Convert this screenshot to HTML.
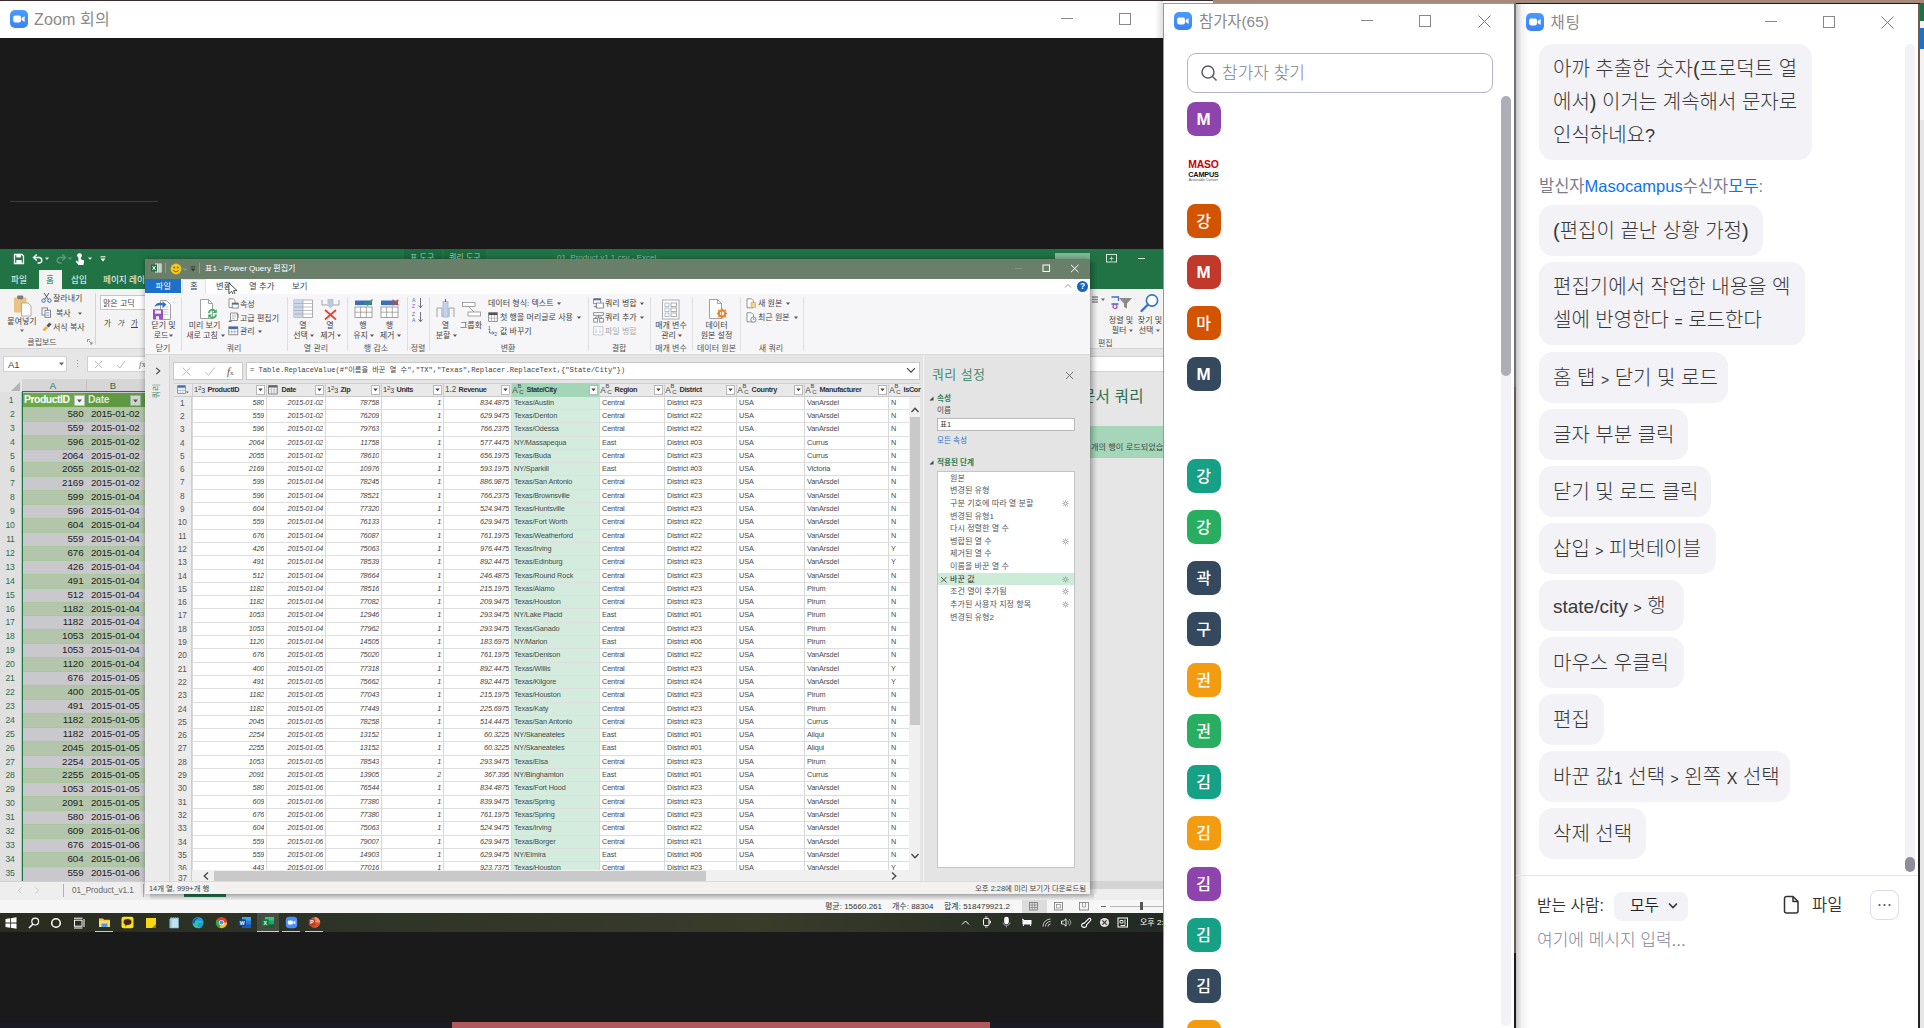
<!DOCTYPE html><html lang="ko"><head><meta charset="utf-8"><title>Zoom</title><style>
*{box-sizing:border-box;margin:0;padding:0}
html,body{width:1924px;height:1028px;overflow:hidden;background:#1a1a1a}
body{font-family:"Liberation Sans","Noto Sans CJK KR",sans-serif;position:relative;color:#222}
.a{position:absolute}
.t{position:absolute;white-space:nowrap;line-height:1}
.zi{position:absolute;width:18px;height:18px;border-radius:5px;background:linear-gradient(#4a9bff,#3b82f6)}
.av{position:absolute;left:1186.5px;width:34px;height:34px;border-radius:8.5px;color:#fff;font-size:17px;line-height:36px;text-align:center;font-weight:bold}
.av.k{font-weight:500;font-size:16px}
.l{font-size:14px}
.bub{position:absolute;left:1539px;height:51px;border-radius:14px;background:#f2f2f7;font-size:20px;line-height:52px;padding-left:14px;color:#383838;white-space:nowrap;font-weight:300}

.s{position:absolute;white-space:nowrap;line-height:1;font-size:8px;color:#444}
.r{text-align:right}
.c{text-align:center}
.pq td{padding:0}
.row{position:absolute;left:0;height:14px;width:736px}
.cell{position:absolute;top:0;height:14px;line-height:12px;font-size:7.3px;color:#4a4a4a;letter-spacing:-.13px;white-space:nowrap;overflow:hidden}
.num{font-style:italic;text-align:right;color:#444;letter-spacing:-.17px}
.xr{position:absolute;left:0;width:146px;height:14px}
.xr div{position:absolute;top:0;height:14px;line-height:14px;font-size:9.8px;color:#222;white-space:nowrap;letter-spacing:-.1px}
</style></head><body><div class="a" style="left:0;top:0;width:1924px;height:3px;background:#a58a7c"></div><div class="a" style="left:0;top:0;width:1213px;height:38px;background:#fff;border-top:1px solid #3a2b2e"></div><div class="zi" style="left:10px;top:10px"></div><svg class="a" style="left:10px;top:10px" width="18" height="18" viewBox="0 0 18 18"><rect x="3.2" y="5.6" width="7.8" height="6.8" rx="1.8" fill="#fff"/><path d="M11.6 8.1 L14.6 6 V12 L11.6 9.9Z" fill="#fff"/></svg><div class="t" style="left:34px;top:11.5px;font-size:16px;color:#8a8a8a;letter-spacing:.15px">Zoom 회의</div><div class="a" style="left:1061px;top:18px;width:12px;height:1px;background:#888"></div><div class="a" style="left:1119px;top:13px;width:12px;height:12px;border:1px solid #888"></div><div class="a" style="left:10px;top:201px;width:148px;height:1px;background:#3c3c3c"></div><div class="a" style="left:0;top:1022px;width:1164px;height:6px;background:#1b1b26"></div><div class="a" style="left:452px;top:1022px;width:538px;height:6px;background:#b05a5e"></div><div class="a" style="left:0px;top:249px;width:1164px;height:683px;background:#e6e6e6;"></div><div class="a" style="left:0px;top:249px;width:1164px;height:40px;background:#217346;"></div><div class="a" style="left:404px;top:249px;width:38px;height:12px;background:#1d6a3f;"></div><div class="a" style="left:444px;top:249px;width:42px;height:12px;background:#1d6a3f;"></div><div class="a" style="left:0;top:249px;width:1164px;height:10px;overflow:hidden"><div class="s" style="left:410px;top:4.5px;font-size:8px;color:#a9cdb8;">표 도구</div><div class="s" style="left:449px;top:4.5px;font-size:8px;color:#a9cdb8;">쿼리 도구</div><div class="s" style="left:557px;top:4.5px;font-size:8px;color:#8dbba2;">01_Product v1.1.csv  -  Excel</div></div><div class="a" style="left:1055px;top:253px;width:35px;height:7px;background:#7fb896;"></div><svg class="a" style="left:1106px;top:254px" width="12" height="9" viewBox="0 0 12 9"><rect x=".5" y=".5" width="10" height="7.5" fill="none" stroke="#cfe3d6"/><path d="M5.5 2.5V6.5M3.5 4.5H7.5" stroke="#cfe3d6" stroke-width=".8"/></svg><div class="a" style="left:1138px;top:258px;width:7px;height:1px;background:#cfe3d6;"></div><svg class="a" style="left:13px;top:253px" width="12" height="12" viewBox="0 0 12 12"><path d="M1.5 1.5H9L10.5 3V10.5H1.5Z" fill="none" stroke="#fff" stroke-width="1.3"/><rect x="3.3" y="1.5" width="4.6" height="3" fill="#fff"/><rect x="3.3" y="7" width="5.4" height="3.5" fill="#fff"/></svg><svg class="a" style="left:32px;top:253px" width="12" height="12" viewBox="0 0 12 12"><path d="M2 4.5H7.5A2.8 2.8 0 0 1 7.5 10H5.5" fill="none" stroke="#fff" stroke-width="1.4"/><path d="M4.8 1.5L1.5 4.5L4.8 7.5" fill="none" stroke="#fff" stroke-width="1.4"/></svg><svg class="a" style="left:45px;top:257px" width="5" height="4" viewBox="0 0 5 4"><path d="M0 .5H4L2 3Z" fill="#dfece4"/></svg><svg class="a" style="left:55px;top:253px" width="12" height="12" viewBox="0 0 12 12"><path d="M10 4.5H4.5A2.8 2.8 0 0 0 4.5 10H6.5" fill="none" stroke="#5d9c79" stroke-width="1.4"/><path d="M7.2 1.5L10.5 4.5L7.2 7.5" fill="none" stroke="#5d9c79" stroke-width="1.4"/></svg><svg class="a" style="left:68px;top:257px" width="5" height="4" viewBox="0 0 5 4"><path d="M0 .5H4L2 3Z" fill="#5d9c79"/></svg><svg class="a" style="left:74px;top:252px" width="12" height="14" viewBox="0 0 12 14"><circle cx="5.5" cy="3.6" r="2.4" fill="#fff"/><path d="M4.4 5V10L2.6 8.6L1.6 9.6L4.6 13H9.4L10.2 8.4L6.8 7.2V5Z" fill="#fff"/></svg><svg class="a" style="left:88px;top:257px" width="5" height="4" viewBox="0 0 5 4"><path d="M0 .5H4L2 3Z" fill="#dfece4"/></svg><svg class="a" style="left:100px;top:256px" width="6" height="6" viewBox="0 0 6 6"><path d="M.5 .8H5.5" stroke="#fff" stroke-width="1"/><path d="M.5 2.6H5.5L3 5.4Z" fill="#fff"/></svg><div class="s" style="left:11px;top:275.7px;font-size:8.6px;color:#fff;">파일</div><div class="a" style="left:39px;top:270px;width:23px;height:19px;background:#f3f3f3;"></div><div class="s" style="left:46px;top:275.7px;font-size:8.6px;color:#217346;">홈</div><div class="s" style="left:71px;top:275.7px;font-size:8.6px;color:#fff;">삽입</div><div class="s" style="left:103px;top:275.7px;font-size:8.6px;color:#fff;">페이지 레이아</div><div class="a" style="left:0px;top:289px;width:1164px;height:60px;background:#f3f3f3;border-bottom:1px solid #d4d4d4"></div><svg class="a" style="left:12px;top:294px" width="22" height="24" viewBox="0 0 22 24"><rect x="2" y="3.5" width="12.5" height="15" rx="1" fill="#eac282"/><rect x="5.2" y="1.6" width="6" height="3.6" rx="1" fill="#7a7a7a"/><path d="M9.5 9H16L19 12V22H9.5Z" fill="#fff" stroke="#9a9a9a" stroke-width=".8"/></svg><div class="s" style="left:-38px;top:318px;font-size:8px;color:#444;width:120px;text-align:center;">붙여넣기</div><svg class="a" style="left:20px;top:329px" width="5" height="4" viewBox="0 0 5 4"><path d="M0 .5H4L2 3Z" fill="#666"/></svg><svg class="a" style="left:41px;top:292px" width="11" height="11" viewBox="0 0 11 11"><path d="M3 1L7.2 7.2M8 1L3.8 7.2" stroke="#555" stroke-width="1"/><circle cx="2.6" cy="8.6" r="1.7" fill="none" stroke="#2b6cb8" stroke-width="1"/><circle cx="8.4" cy="8.6" r="1.7" fill="none" stroke="#2b6cb8" stroke-width="1"/></svg><div class="s" style="left:53px;top:294.5px;font-size:8px;color:#444;">잘라내기</div><svg class="a" style="left:41px;top:307px" width="11" height="11" viewBox="0 0 11 11"><rect x="1" y="1" width="5.5" height="7" fill="#fff" stroke="#777" stroke-width=".9"/><rect x="4" y="3.3" width="5.5" height="7" fill="#fff" stroke="#777" stroke-width=".9"/><path d="M5.2 5.5H8.3M5.2 7H8.3M5.2 8.5H8.3" stroke="#5b8fd0" stroke-width=".6"/></svg><div class="s" style="left:56px;top:309.5px;font-size:8px;color:#444;">복사</div><svg class="a" style="left:78px;top:311.5px" width="5" height="4" viewBox="0 0 5 4"><path d="M0 .5H4L2 3Z" fill="#666"/></svg><svg class="a" style="left:41px;top:321px" width="12" height="11" viewBox="0 0 12 11"><path d="M1.5 8.5L5 5L7 7L3.5 10.5Z" fill="#e8b04c"/><path d="M5.5 4.5L8.5 1.5L10.5 3.5L7.5 6.5Z" fill="#555"/></svg><div class="s" style="left:53px;top:324px;font-size:8px;color:#444;">서식 복사</div><div class="s" style="left:-18px;top:338.5px;font-size:8px;color:#555;width:120px;text-align:center;">클립보드</div><svg class="a" style="left:87px;top:339px" width="6" height="6" viewBox="0 0 6 6"><path d="M.5 .5H3M.5 .5V3M2 2L5 5M5 2.8V5H2.8" fill="none" stroke="#777" stroke-width=".8"/></svg><div class="a" style="left:95px;top:293px;width:1px;height:52px;background:#d4d4d4;"></div><div class="a" style="left:100px;top:295px;width:60px;height:15px;background:#fff;border:1px solid #c6c6c6"></div><div class="s" style="left:103px;top:299.5px;font-size:8px;color:#444;">맑은 고딕</div><div class="s" style="left:104px;top:320.25px;font-size:7.5px;color:#333;">가</div><div class="s" style="left:117px;top:320.25px;font-size:7.5px;color:#444;font-style:italic">가</div><div class="s" style="left:131px;top:320.25px;font-size:7.5px;color:#444;text-decoration:underline">가</div><svg class="a" style="left:1092px;top:296px" width="8" height="8" viewBox="0 0 8 8"><path d="M0 1H6M0 3.5H6M0 6H6" stroke="#888" stroke-width="1.5"/></svg><svg class="a" style="left:1101px;top:298px" width="5" height="4" viewBox="0 0 5 4"><path d="M0 .5H4L2 3Z" fill="#666"/></svg><svg class="a" style="left:1110px;top:294px" width="24" height="16" viewBox="0 0 24 16"><path d="M1.5 3H8.5V7M1.5 10H8.5" fill="none" stroke="#3b6fc4" stroke-width="1.3"/><circle cx="5" cy="12.5" r="2" fill="none" stroke="#a050b0" stroke-width="1.2"/><path d="M9 4H22L17 9.5V14.5L14 13V9.5Z" fill="#8a8a8a"/></svg><svg class="a" style="left:1139px;top:293px" width="22" height="20" viewBox="0 0 22 20"><circle cx="13" cy="7.5" r="5.6" fill="#fff" stroke="#3273c4" stroke-width="1.6"/><path d="M9 11.5L2.5 18" stroke="#3273c4" stroke-width="2.4" stroke-linecap="round"/></svg><div class="s" style="left:1061px;top:317px;font-size:8px;color:#444;width:120px;text-align:center;">정렬 및</div><div class="s" style="left:1090px;top:317px;font-size:8px;color:#444;width:120px;text-align:center;">찾기 및</div><div class="s" style="left:1059px;top:327px;font-size:8px;color:#444;width:120px;text-align:center;">필터</div><div class="s" style="left:1086px;top:327px;font-size:8px;color:#444;width:120px;text-align:center;">선택</div><svg class="a" style="left:1129px;top:329px" width="5" height="4" viewBox="0 0 5 4"><path d="M0 .5H4L2 3Z" fill="#666"/></svg><svg class="a" style="left:1156px;top:329px" width="5" height="4" viewBox="0 0 5 4"><path d="M0 .5H4L2 3Z" fill="#666"/></svg><div class="s" style="left:1098px;top:339.5px;font-size:8px;color:#555;">편집</div><div class="a" style="left:3px;top:356px;width:64px;height:16px;background:#fff;border:1px solid #d0d0d0"></div><div class="s" style="left:8px;top:360.25px;font-size:9.5px;color:#444;">A1</div><svg class="a" style="left:59px;top:362px" width="6" height="4" viewBox="0 0 6 4"><path d="M0 .5H5L2.5 3.5Z" fill="#666"/></svg><div class="a" style="left:77px;top:360px;width:1px;height:1px;background:#999;"></div><div class="a" style="left:77px;top:363px;width:1px;height:1px;background:#999;"></div><div class="a" style="left:77px;top:366px;width:1px;height:1px;background:#999;"></div><div class="a" style="left:87px;top:356px;width:1077px;height:16px;background:#fff;border:1px solid #d0d0d0"></div><svg class="a" style="left:94px;top:360px" width="9" height="9" viewBox="0 0 9 9"><path d="M1 1L8 8M8 1L1 8" stroke="#b8b8b8" stroke-width="1"/></svg><svg class="a" style="left:116px;top:360px" width="10" height="9" viewBox="0 0 10 9"><path d="M1 5L3.8 8L9 1" fill="none" stroke="#b8b8b8" stroke-width="1"/></svg><div class="s" style="left:139px;top:360px;font-size:9px;color:#666;font-family:'Liberation Serif',serif"><i>f</i>x</div><div class="a" style="left:0px;top:379px;width:1164px;height:13px;background:#e6e6e6;"></div><svg class="a" style="left:10px;top:381px" width="11" height="11" viewBox="0 0 11 11"><path d="M10 1V10H1Z" fill="#b4b4b4"/></svg><div class="a" style="left:22px;top:379px;width:124px;height:13px;background:#d6d6d6;border-bottom:1px solid #217346"></div><div class="a" style="left:85.5px;top:380px;width:1px;height:11px;background:#c2c2c2;"></div><div class="s" style="left:-7px;top:380.75px;font-size:9.5px;color:#217346;width:120px;text-align:center;">A</div><div class="s" style="left:53px;top:380.75px;font-size:9.5px;color:#217346;width:120px;text-align:center;">B</div><div class="a" style="left:0px;top:392px;width:22px;height:489px;background:#e0e0e0;"></div><div class="a" style="left:22px;top:392px;width:124px;height:489px;background:#c9c8cd;"></div><div class="a" style="left:22px;top:392.5px;width:124px;height:15px;background:#6aa84a;"></div><div class="a" style="left:85px;top:392.5px;width:61px;height:15px;background:#5f9a43;"></div><div class="s" style="left:24px;top:395px;font-size:10.4px;color:#fff;font-weight:bold;letter-spacing:-.45px">ProductID</div><div class="s" style="left:88px;top:395px;font-size:10.4px;font-weight:bold;color:#d8e8cf;letter-spacing:-.3px">Date</div><div class="a" style="left:74px;top:395px;width:11px;height:11px;background:#f4f4f4;border:1px solid #bbb"></div><svg class="a" style="left:77px;top:399px" width="6" height="4" viewBox="0 0 6 4"><path d="M0 .5H5L2.5 3.5Z" fill="#555"/></svg><div class="a" style="left:130px;top:395px;width:11px;height:11px;background:#cfd6c8;border:1px solid #9aa"></div><svg class="a" style="left:133px;top:399px" width="6" height="4" viewBox="0 0 6 4"><path d="M0 .5H5L2.5 3.5Z" fill="#555"/></svg><div class="s r" style="left:0;top:396px;width:13.5px;font-size:8.6px;color:#2f6b4b">1</div><div class="xr" style="top:406.81px"><div style="left:22px;width:124px;background:#b3c6ab;border-top:1px solid #a9c79c"></div><div style="left:0;width:14.5px;text-align:right;font-size:8.6px;color:#2f6b4b;letter-spacing:-.3px">2</div><div style="left:22px;width:61.5px;text-align:right">580</div><div style="left:89px;width:50.5px;text-align:right;letter-spacing:-.15px">2015-01-02</div></div><div class="xr" style="top:420.72px"><div style="left:22px;width:124px;background:#c9c8cd;border-top:1px solid #a9c79c"></div><div style="left:0;width:14.5px;text-align:right;font-size:8.6px;color:#2f6b4b;letter-spacing:-.3px">3</div><div style="left:22px;width:61.5px;text-align:right">559</div><div style="left:89px;width:50.5px;text-align:right;letter-spacing:-.15px">2015-01-02</div></div><div class="xr" style="top:434.63px"><div style="left:22px;width:124px;background:#b3c6ab;border-top:1px solid #a9c79c"></div><div style="left:0;width:14.5px;text-align:right;font-size:8.6px;color:#2f6b4b;letter-spacing:-.3px">4</div><div style="left:22px;width:61.5px;text-align:right">596</div><div style="left:89px;width:50.5px;text-align:right;letter-spacing:-.15px">2015-01-02</div></div><div class="xr" style="top:448.54px"><div style="left:22px;width:124px;background:#c9c8cd;border-top:1px solid #a9c79c"></div><div style="left:0;width:14.5px;text-align:right;font-size:8.6px;color:#2f6b4b;letter-spacing:-.3px">5</div><div style="left:22px;width:61.5px;text-align:right">2064</div><div style="left:89px;width:50.5px;text-align:right;letter-spacing:-.15px">2015-01-02</div></div><div class="xr" style="top:462.45px"><div style="left:22px;width:124px;background:#b3c6ab;border-top:1px solid #a9c79c"></div><div style="left:0;width:14.5px;text-align:right;font-size:8.6px;color:#2f6b4b;letter-spacing:-.3px">6</div><div style="left:22px;width:61.5px;text-align:right">2055</div><div style="left:89px;width:50.5px;text-align:right;letter-spacing:-.15px">2015-01-02</div></div><div class="xr" style="top:476.36px"><div style="left:22px;width:124px;background:#c9c8cd;border-top:1px solid #a9c79c"></div><div style="left:0;width:14.5px;text-align:right;font-size:8.6px;color:#2f6b4b;letter-spacing:-.3px">7</div><div style="left:22px;width:61.5px;text-align:right">2169</div><div style="left:89px;width:50.5px;text-align:right;letter-spacing:-.15px">2015-01-02</div></div><div class="xr" style="top:490.27px"><div style="left:22px;width:124px;background:#b3c6ab;border-top:1px solid #a9c79c"></div><div style="left:0;width:14.5px;text-align:right;font-size:8.6px;color:#2f6b4b;letter-spacing:-.3px">8</div><div style="left:22px;width:61.5px;text-align:right">599</div><div style="left:89px;width:50.5px;text-align:right;letter-spacing:-.15px">2015-01-04</div></div><div class="xr" style="top:504.18px"><div style="left:22px;width:124px;background:#c9c8cd;border-top:1px solid #a9c79c"></div><div style="left:0;width:14.5px;text-align:right;font-size:8.6px;color:#2f6b4b;letter-spacing:-.3px">9</div><div style="left:22px;width:61.5px;text-align:right">596</div><div style="left:89px;width:50.5px;text-align:right;letter-spacing:-.15px">2015-01-04</div></div><div class="xr" style="top:518.09px"><div style="left:22px;width:124px;background:#b3c6ab;border-top:1px solid #a9c79c"></div><div style="left:0;width:14.5px;text-align:right;font-size:8.6px;color:#2f6b4b;letter-spacing:-.3px">10</div><div style="left:22px;width:61.5px;text-align:right">604</div><div style="left:89px;width:50.5px;text-align:right;letter-spacing:-.15px">2015-01-04</div></div><div class="xr" style="top:532.00px"><div style="left:22px;width:124px;background:#c9c8cd;border-top:1px solid #a9c79c"></div><div style="left:0;width:14.5px;text-align:right;font-size:8.6px;color:#2f6b4b;letter-spacing:-.3px">11</div><div style="left:22px;width:61.5px;text-align:right">559</div><div style="left:89px;width:50.5px;text-align:right;letter-spacing:-.15px">2015-01-04</div></div><div class="xr" style="top:545.91px"><div style="left:22px;width:124px;background:#b3c6ab;border-top:1px solid #a9c79c"></div><div style="left:0;width:14.5px;text-align:right;font-size:8.6px;color:#2f6b4b;letter-spacing:-.3px">12</div><div style="left:22px;width:61.5px;text-align:right">676</div><div style="left:89px;width:50.5px;text-align:right;letter-spacing:-.15px">2015-01-04</div></div><div class="xr" style="top:559.82px"><div style="left:22px;width:124px;background:#c9c8cd;border-top:1px solid #a9c79c"></div><div style="left:0;width:14.5px;text-align:right;font-size:8.6px;color:#2f6b4b;letter-spacing:-.3px">13</div><div style="left:22px;width:61.5px;text-align:right">426</div><div style="left:89px;width:50.5px;text-align:right;letter-spacing:-.15px">2015-01-04</div></div><div class="xr" style="top:573.73px"><div style="left:22px;width:124px;background:#b3c6ab;border-top:1px solid #a9c79c"></div><div style="left:0;width:14.5px;text-align:right;font-size:8.6px;color:#2f6b4b;letter-spacing:-.3px">14</div><div style="left:22px;width:61.5px;text-align:right">491</div><div style="left:89px;width:50.5px;text-align:right;letter-spacing:-.15px">2015-01-04</div></div><div class="xr" style="top:587.64px"><div style="left:22px;width:124px;background:#c9c8cd;border-top:1px solid #a9c79c"></div><div style="left:0;width:14.5px;text-align:right;font-size:8.6px;color:#2f6b4b;letter-spacing:-.3px">15</div><div style="left:22px;width:61.5px;text-align:right">512</div><div style="left:89px;width:50.5px;text-align:right;letter-spacing:-.15px">2015-01-04</div></div><div class="xr" style="top:601.55px"><div style="left:22px;width:124px;background:#b3c6ab;border-top:1px solid #a9c79c"></div><div style="left:0;width:14.5px;text-align:right;font-size:8.6px;color:#2f6b4b;letter-spacing:-.3px">16</div><div style="left:22px;width:61.5px;text-align:right">1182</div><div style="left:89px;width:50.5px;text-align:right;letter-spacing:-.15px">2015-01-04</div></div><div class="xr" style="top:615.46px"><div style="left:22px;width:124px;background:#c9c8cd;border-top:1px solid #a9c79c"></div><div style="left:0;width:14.5px;text-align:right;font-size:8.6px;color:#2f6b4b;letter-spacing:-.3px">17</div><div style="left:22px;width:61.5px;text-align:right">1182</div><div style="left:89px;width:50.5px;text-align:right;letter-spacing:-.15px">2015-01-04</div></div><div class="xr" style="top:629.37px"><div style="left:22px;width:124px;background:#b3c6ab;border-top:1px solid #a9c79c"></div><div style="left:0;width:14.5px;text-align:right;font-size:8.6px;color:#2f6b4b;letter-spacing:-.3px">18</div><div style="left:22px;width:61.5px;text-align:right">1053</div><div style="left:89px;width:50.5px;text-align:right;letter-spacing:-.15px">2015-01-04</div></div><div class="xr" style="top:643.28px"><div style="left:22px;width:124px;background:#c9c8cd;border-top:1px solid #a9c79c"></div><div style="left:0;width:14.5px;text-align:right;font-size:8.6px;color:#2f6b4b;letter-spacing:-.3px">19</div><div style="left:22px;width:61.5px;text-align:right">1053</div><div style="left:89px;width:50.5px;text-align:right;letter-spacing:-.15px">2015-01-04</div></div><div class="xr" style="top:657.19px"><div style="left:22px;width:124px;background:#b3c6ab;border-top:1px solid #a9c79c"></div><div style="left:0;width:14.5px;text-align:right;font-size:8.6px;color:#2f6b4b;letter-spacing:-.3px">20</div><div style="left:22px;width:61.5px;text-align:right">1120</div><div style="left:89px;width:50.5px;text-align:right;letter-spacing:-.15px">2015-01-04</div></div><div class="xr" style="top:671.10px"><div style="left:22px;width:124px;background:#c9c8cd;border-top:1px solid #a9c79c"></div><div style="left:0;width:14.5px;text-align:right;font-size:8.6px;color:#2f6b4b;letter-spacing:-.3px">21</div><div style="left:22px;width:61.5px;text-align:right">676</div><div style="left:89px;width:50.5px;text-align:right;letter-spacing:-.15px">2015-01-05</div></div><div class="xr" style="top:685.01px"><div style="left:22px;width:124px;background:#b3c6ab;border-top:1px solid #a9c79c"></div><div style="left:0;width:14.5px;text-align:right;font-size:8.6px;color:#2f6b4b;letter-spacing:-.3px">22</div><div style="left:22px;width:61.5px;text-align:right">400</div><div style="left:89px;width:50.5px;text-align:right;letter-spacing:-.15px">2015-01-05</div></div><div class="xr" style="top:698.92px"><div style="left:22px;width:124px;background:#c9c8cd;border-top:1px solid #a9c79c"></div><div style="left:0;width:14.5px;text-align:right;font-size:8.6px;color:#2f6b4b;letter-spacing:-.3px">23</div><div style="left:22px;width:61.5px;text-align:right">491</div><div style="left:89px;width:50.5px;text-align:right;letter-spacing:-.15px">2015-01-05</div></div><div class="xr" style="top:712.83px"><div style="left:22px;width:124px;background:#b3c6ab;border-top:1px solid #a9c79c"></div><div style="left:0;width:14.5px;text-align:right;font-size:8.6px;color:#2f6b4b;letter-spacing:-.3px">24</div><div style="left:22px;width:61.5px;text-align:right">1182</div><div style="left:89px;width:50.5px;text-align:right;letter-spacing:-.15px">2015-01-05</div></div><div class="xr" style="top:726.74px"><div style="left:22px;width:124px;background:#c9c8cd;border-top:1px solid #a9c79c"></div><div style="left:0;width:14.5px;text-align:right;font-size:8.6px;color:#2f6b4b;letter-spacing:-.3px">25</div><div style="left:22px;width:61.5px;text-align:right">1182</div><div style="left:89px;width:50.5px;text-align:right;letter-spacing:-.15px">2015-01-05</div></div><div class="xr" style="top:740.65px"><div style="left:22px;width:124px;background:#b3c6ab;border-top:1px solid #a9c79c"></div><div style="left:0;width:14.5px;text-align:right;font-size:8.6px;color:#2f6b4b;letter-spacing:-.3px">26</div><div style="left:22px;width:61.5px;text-align:right">2045</div><div style="left:89px;width:50.5px;text-align:right;letter-spacing:-.15px">2015-01-05</div></div><div class="xr" style="top:754.56px"><div style="left:22px;width:124px;background:#c9c8cd;border-top:1px solid #a9c79c"></div><div style="left:0;width:14.5px;text-align:right;font-size:8.6px;color:#2f6b4b;letter-spacing:-.3px">27</div><div style="left:22px;width:61.5px;text-align:right">2254</div><div style="left:89px;width:50.5px;text-align:right;letter-spacing:-.15px">2015-01-05</div></div><div class="xr" style="top:768.47px"><div style="left:22px;width:124px;background:#b3c6ab;border-top:1px solid #a9c79c"></div><div style="left:0;width:14.5px;text-align:right;font-size:8.6px;color:#2f6b4b;letter-spacing:-.3px">28</div><div style="left:22px;width:61.5px;text-align:right">2255</div><div style="left:89px;width:50.5px;text-align:right;letter-spacing:-.15px">2015-01-05</div></div><div class="xr" style="top:782.38px"><div style="left:22px;width:124px;background:#c9c8cd;border-top:1px solid #a9c79c"></div><div style="left:0;width:14.5px;text-align:right;font-size:8.6px;color:#2f6b4b;letter-spacing:-.3px">29</div><div style="left:22px;width:61.5px;text-align:right">1053</div><div style="left:89px;width:50.5px;text-align:right;letter-spacing:-.15px">2015-01-05</div></div><div class="xr" style="top:796.29px"><div style="left:22px;width:124px;background:#b3c6ab;border-top:1px solid #a9c79c"></div><div style="left:0;width:14.5px;text-align:right;font-size:8.6px;color:#2f6b4b;letter-spacing:-.3px">30</div><div style="left:22px;width:61.5px;text-align:right">2091</div><div style="left:89px;width:50.5px;text-align:right;letter-spacing:-.15px">2015-01-05</div></div><div class="xr" style="top:810.20px"><div style="left:22px;width:124px;background:#c9c8cd;border-top:1px solid #a9c79c"></div><div style="left:0;width:14.5px;text-align:right;font-size:8.6px;color:#2f6b4b;letter-spacing:-.3px">31</div><div style="left:22px;width:61.5px;text-align:right">580</div><div style="left:89px;width:50.5px;text-align:right;letter-spacing:-.15px">2015-01-06</div></div><div class="xr" style="top:824.11px"><div style="left:22px;width:124px;background:#b3c6ab;border-top:1px solid #a9c79c"></div><div style="left:0;width:14.5px;text-align:right;font-size:8.6px;color:#2f6b4b;letter-spacing:-.3px">32</div><div style="left:22px;width:61.5px;text-align:right">609</div><div style="left:89px;width:50.5px;text-align:right;letter-spacing:-.15px">2015-01-06</div></div><div class="xr" style="top:838.02px"><div style="left:22px;width:124px;background:#c9c8cd;border-top:1px solid #a9c79c"></div><div style="left:0;width:14.5px;text-align:right;font-size:8.6px;color:#2f6b4b;letter-spacing:-.3px">33</div><div style="left:22px;width:61.5px;text-align:right">676</div><div style="left:89px;width:50.5px;text-align:right;letter-spacing:-.15px">2015-01-06</div></div><div class="xr" style="top:851.93px"><div style="left:22px;width:124px;background:#b3c6ab;border-top:1px solid #a9c79c"></div><div style="left:0;width:14.5px;text-align:right;font-size:8.6px;color:#2f6b4b;letter-spacing:-.3px">34</div><div style="left:22px;width:61.5px;text-align:right">604</div><div style="left:89px;width:50.5px;text-align:right;letter-spacing:-.15px">2015-01-06</div></div><div class="xr" style="top:865.84px"><div style="left:22px;width:124px;background:#c9c8cd;border-top:1px solid #a9c79c"></div><div style="left:0;width:14.5px;text-align:right;font-size:8.6px;color:#2f6b4b;letter-spacing:-.3px">35</div><div style="left:22px;width:61.5px;text-align:right">559</div><div style="left:89px;width:50.5px;text-align:right;letter-spacing:-.15px">2015-01-06</div></div><div class="a" style="left:21.5px;top:392px;width:1.5px;height:489px;background:#217346;"></div><div class="a" style="left:0px;top:392px;width:22px;height:489px;background:transparent;border-right:1px solid #bdbdbd"></div><div class="a" style="left:0px;top:881px;width:1164px;height:18.5px;background:#eeeeee;border-top:1px solid #cfcfcf"></div><svg class="a" style="left:17px;top:887px" width="6" height="7" viewBox="0 0 6 7"><path d="M4.5 .5L1.5 3.5L4.5 6.5" fill="none" stroke="#c9c9c9" stroke-width="1"/></svg><svg class="a" style="left:34px;top:887px" width="6" height="7" viewBox="0 0 6 7"><path d="M1.5 .5L4.5 3.5L1.5 6.5" fill="none" stroke="#c9c9c9" stroke-width="1"/></svg><div class="a" style="left:63px;top:884px;width:1px;height:13px;background:#b0b0b0;"></div><div class="s" style="left:72px;top:886.9px;font-size:8.2px;color:#666;">01_Product_v1.1</div><div class="a" style="left:143px;top:884px;width:1px;height:13px;background:#b0b0b0;"></div><div class="a" style="left:184px;top:894px;width:42px;height:3px;background:#217346;"></div><div class="a" style="left:0px;top:899.5px;width:1164px;height:13.5px;background:#f6f6f6;"></div><div class="s" style="left:825px;top:902.5px;font-size:8px;color:#333;">평균: 15660.261</div><div class="s" style="left:892px;top:902.5px;font-size:8px;color:#333;">개수: 88304</div><div class="s" style="left:944px;top:902.5px;font-size:8px;color:#333;">합계: 518479921.2</div><div class="a" style="left:1022px;top:900px;width:25px;height:13px;background:#dcdcdc;"></div><svg class="a" style="left:1029px;top:902px" width="10" height="9" viewBox="0 0 10 9"><rect x=".5" y=".5" width="8" height="7.5" fill="none" stroke="#777" stroke-width=".8"/><path d="M3.2 .5V8M5.8 .5V8M.5 3H8.5M.5 5.5H8.5" stroke="#777" stroke-width=".6"/></svg><svg class="a" style="left:1054px;top:902px" width="10" height="9" viewBox="0 0 10 9"><rect x=".5" y=".5" width="8" height="7.5" fill="none" stroke="#777" stroke-width=".8"/><rect x="2.5" y="2.5" width="4" height="3.5" fill="none" stroke="#777" stroke-width=".6"/></svg><svg class="a" style="left:1079px;top:902px" width="11" height="9" viewBox="0 0 11 9"><rect x=".5" y=".5" width="9" height="7.5" fill="none" stroke="#777" stroke-width=".8"/><path d="M3.5 .5V5H6.5V.5" fill="none" stroke="#777" stroke-width=".6"/></svg><div class="a" style="left:1101px;top:906px;width:5px;height:1px;background:#666;"></div><div class="a" style="left:1110px;top:906px;width:54px;height:1px;background:#b8b8b8;"></div><div class="a" style="left:1140px;top:902px;width:2.5px;height:8px;background:#555;"></div><div class="a" style="left:1090px;top:372px;width:74px;height:509px;background:#e6e6e6;"></div><div class="s" style="left:1081px;top:388.7px;font-size:15.6px;color:#2c7050;letter-spacing:.2px">문서 쿼리</div><div class="a" style="left:1090px;top:426px;width:74px;height:32px;background:#a5d6ba;"></div><div class="s" style="left:1091px;top:444.4px;font-size:8.2px;color:#444;">개의 행이 로드되었습</div><div class="a" style="left:1090px;top:881px;width:74px;height:8px;background:#d4d4d4;"></div><div class="a" style="left:1090px;top:262px;width:8px;height:632px;background:linear-gradient(90deg,rgba(0,0,0,.16),rgba(0,0,0,0));"></div><div class="a" style="left:150px;top:894px;width:944px;height:6px;background:linear-gradient(rgba(0,0,0,.16),rgba(0,0,0,0));"></div><div class="a" style="left:0px;top:913px;width:1164px;height:19px;background:linear-gradient(90deg,#2b2c20 0%,#2c3326 25%,#34382a 50%,#3a3c2a 65%,#2c3226 82%,#222a24 100%);"></div><svg class="a" style="left:5px;top:917px" width="12" height="12" viewBox="0 0 12 12"><path d="M.5 2L5 1.3V5.6H.5ZM5.8 1.2L11.5.3V5.6H5.8ZM.5 6.4H5V10.7L.5 10ZM5.8 6.4H11.5V11.7L5.8 10.8Z" fill="#fff"/></svg><svg class="a" style="left:28px;top:917px" width="12" height="12" viewBox="0 0 12 12"><circle cx="7.2" cy="4.6" r="3.4" fill="none" stroke="#fff" stroke-width="1.2"/><path d="M4.8 7.2L1 11" stroke="#fff" stroke-width="1.4"/></svg><svg class="a" style="left:50px;top:917px" width="12" height="12" viewBox="0 0 12 12"><circle cx="6" cy="6" r="4.3" fill="none" stroke="#fff" stroke-width="1.5"/></svg><svg class="a" style="left:73px;top:917px" width="13" height="12" viewBox="0 0 13 12"><rect x="1.5" y="3.2" width="7.5" height="6" fill="none" stroke="#fff" stroke-width="1"/><path d="M1 1.2H9.5M1 11H9.5M11 2V10" stroke="#fff" stroke-width="1"/></svg><svg class="a" style="left:98px;top:916px" width="13" height="13" viewBox="0 0 13 13"><path d="M1 2.5H5L6 3.8H12V11H1Z" fill="#f4c64a"/><rect x="1" y="5" width="11" height="6" fill="#fbdc74"/><rect x="3.5" y="7.5" width="6" height="3.5" fill="#4d9be8"/></svg><div class="a" style="left:95px;top:930.5px;width:18px;height:1.2px;background:#b9d9b4;"></div><svg class="a" style="left:121px;top:916px" width="13" height="13" viewBox="0 0 13 13"><rect x=".5" y=".8" width="12" height="11.4" rx="2" fill="#f7e01e"/><ellipse cx="6.5" cy="6" rx="4" ry="3" fill="#47231a"/><path d="M4.6 8L4 10.4L6.6 8.6Z" fill="#47231a"/></svg><svg class="a" style="left:145px;top:917px" width="12" height="12" viewBox="0 0 12 12"><rect x="1" y="1" width="10" height="10" fill="#f7d716"/><path d="M7 11L11 7V11Z" fill="#9a7d0a"/></svg><svg class="a" style="left:168px;top:916px" width="12" height="13" viewBox="0 0 12 13"><rect x="2.5" y="2" width="8" height="10" fill="#bfe1ee" stroke="#7fb3c8" stroke-width=".6"/><path d="M3.5 1V3M5.5 1V3M7.5 1V3M9.5 1V3" stroke="#8aa" stroke-width=".7"/><rect x="1.5" y="3" width="2" height="9" fill="#8fc3d8"/></svg><svg class="a" style="left:191px;top:916px" width="14" height="13" viewBox="0 0 14 13"><circle cx="7" cy="6.5" r="5.6" fill="#1b9de2"/><path d="M2 8.5C2 4 11 3 12.4 7.5C9 5.5 6 6.5 6.5 9.5C7 11.5 10 11.8 11.5 10.5C9 13.5 2.5 12.5 2 8.5Z" fill="#35c1a0"/><path d="M1.5 7C2 3 6 1 9.5 2C5.5 2 3.5 4.5 3.8 7.5Z" fill="#0c59a4"/></svg><svg class="a" style="left:215px;top:916px" width="13" height="13" viewBox="0 0 13 13"><circle cx="6.5" cy="6.5" r="5.6" fill="#e33b2e"/><path d="M6.5 6.5L1.7 3.6A5.6 5.6 0 0 0 4.6 11.8Z" fill="#2da94f"/><path d="M6.5 6.5L4.6 11.8A5.6 5.6 0 0 0 12.1 6.5Z" fill="#fcc31e"/><circle cx="6.5" cy="6.5" r="2.6" fill="#fff"/><circle cx="6.5" cy="6.5" r="2" fill="#4a8af4"/></svg><svg class="a" style="left:238px;top:916px" width="14" height="13" viewBox="0 0 14 13"><rect x="4" y="1" width="9" height="11" rx="1" fill="#2b7cd3"/><rect x="4" y="1" width="9" height="3.6" fill="#41a5ee"/><rect x="4" y="8.4" width="9" height="3.6" fill="#185abd"/><rect x=".8" y="3.2" width="7" height="6.8" rx=".8" fill="#103f91"/><text x="4.3" y="8.6" font-size="5.2" font-weight="bold" fill="#fff" text-anchor="middle" font-family="Liberation Sans,sans-serif">W</text></svg><div class="a" style="left:257px;top:913px;width:22px;height:19px;background:rgba(255,255,255,.13);"></div><svg class="a" style="left:261px;top:916px" width="14" height="13" viewBox="0 0 14 13"><rect x="4" y="1" width="9" height="11" rx="1" fill="#21a366"/><rect x="4" y="1" width="9" height="3.6" fill="#33c481"/><rect x="4" y="8.4" width="9" height="3.6" fill="#185c37"/><rect x=".8" y="3.2" width="7" height="6.8" rx=".8" fill="#107c41"/><text x="4.3" y="8.6" font-size="5.2" font-weight="bold" fill="#fff" text-anchor="middle" font-family="Liberation Sans,sans-serif">X</text></svg><div class="a" style="left:257px;top:930.5px;width:22px;height:1.2px;background:#b9d9b4;"></div><svg class="a" style="left:285px;top:916px" width="13" height="13" viewBox="0 0 13 13"><rect x=".8" y=".8" width="11.4" height="11.4" rx="3.4" fill="#4a8cff"/><rect x="2.8" y="4.4" width="5" height="4.2" rx="1" fill="#fff"/><path d="M8.2 6L10.3 4.6V8.4L8.2 7Z" fill="#fff"/></svg><div class="a" style="left:282px;top:930.5px;width:18px;height:1.2px;background:#b9d9b4;"></div><svg class="a" style="left:308px;top:916px" width="13" height="13" viewBox="0 0 13 13"><circle cx="6.8" cy="6.5" r="5.4" fill="#d35230"/><path d="M6.8 1.1A5.4 5.4 0 0 1 12.2 6.5H6.8Z" fill="#ff8f6b"/><rect x=".8" y="3.2" width="6.6" height="6.6" rx=".8" fill="#c43e1c"/><text x="4.1" y="8.4" font-size="5.2" font-weight="bold" fill="#fff" text-anchor="middle" font-family="Liberation Sans,sans-serif">P</text></svg><div class="a" style="left:305px;top:930.5px;width:18px;height:1.2px;background:#b9d9b4;"></div><svg class="a" style="left:961px;top:919px" width="9" height="7" viewBox="0 0 9 7"><path d="M1 5.5L4.5 2L8 5.5" fill="none" stroke="#fff" stroke-width="1"/></svg><svg class="a" style="left:982px;top:916px" width="9" height="12" viewBox="0 0 9 12"><rect x="1.5" y="2.5" width="5.5" height="7" rx="1" fill="none" stroke="#fff" stroke-width="1"/><path d="M7 5H8.5V7H7M3 1H5.5M3 11H5.5" stroke="#fff" stroke-width=".8" fill="none"/></svg><svg class="a" style="left:1002px;top:916px" width="9" height="12" viewBox="0 0 9 12"><rect x="2.2" y=".8" width="4.6" height="7.4" rx="2.3" fill="#fff"/><path d="M1 6.5C1 10.4 8 10.4 8 6.5" fill="none" stroke="#bbb" stroke-width=".8"/><path d="M4.5 9.6V11.4" stroke="#bbb" stroke-width=".8"/></svg><svg class="a" style="left:1021px;top:917px" width="12" height="10" viewBox="0 0 12 10"><rect x="1.5" y="3" width="9" height="4.5" fill="#fff"/><path d="M1 2L3 3M2.5 7.5V9M9.5 7.5V9" stroke="#fff" stroke-width="1"/></svg><svg class="a" style="left:1041px;top:917px" width="12" height="11" viewBox="0 0 12 11"><path d="M2 9.5A7.5 7.5 0 0 1 9.5 2" fill="none" stroke="#ccc" stroke-width="1"/><path d="M4.5 9.5A5 5 0 0 1 9.5 4.5" fill="none" stroke="#ccc" stroke-width="1"/><path d="M7 9.5A2.5 2.5 0 0 1 9.5 7" fill="none" stroke="#ccc" stroke-width="1"/></svg><svg class="a" style="left:1060px;top:917px" width="14" height="11" viewBox="0 0 14 11"><path d="M1.5 4H3.5L6 1.8V9.2L3.5 7H1.5Z" fill="none" stroke="#fff" stroke-width=".9"/><path d="M7.8 3.6A3 3 0 0 1 7.8 7.4M9.4 2.2A5 5 0 0 1 9.4 8.8" fill="none" stroke="#bbb" stroke-width=".8"/></svg><svg class="a" style="left:1080px;top:916px" width="13" height="13" viewBox="0 0 13 13"><path d="M2 10.5C1 9 2 7 4 7.5L8.5 2.8C9.5 1.6 11.6 2.8 10.6 4.4L6.5 9C7 11.2 4 12.2 2 10.5Z" fill="none" stroke="#fff" stroke-width="1.1"/></svg><svg class="a" style="left:1099px;top:917px" width="11" height="11" viewBox="0 0 11 11"><circle cx="5.5" cy="5.5" r="4.6" fill="#ddd"/><path d="M3.4 3.4L7.6 7.6M7.6 3.4L3.4 7.6" stroke="#333" stroke-width="1.1"/></svg><svg class="a" style="left:1117px;top:917px" width="12" height="11" viewBox="0 0 12 11"><rect x="1" y="1" width="9.5" height="9" fill="none" stroke="#fff" stroke-width="1"/><path d="M3 3.5H6V6H3ZM8 2.5V8.5M3.5 8.5H8" stroke="#fff" stroke-width=".9" fill="none"/></svg><div class="s" style="left:1140px;top:919px;font-size:8px;color:#fff;">오후 2:</div><div class="a" style="left:145px;top:259px;width:945px;height:635px;background:#f0f0f0;box-shadow:0 0 6px rgba(0,0,0,.35)"></div><div class="a" style="left:145px;top:259px;width:945px;height:20px;background:#6a7f69;"></div><svg class="a" style="left:151px;top:263px" width="11" height="10" viewBox="0 0 11 10"><rect x="4" y=".5" width="6.5" height="9" fill="#fff"/><path d="M5.2 .5V9.5M7.2 .5V9.5M9 .5V9.5" stroke="#6a8169" stroke-width=".7"/><rect x="0" y="1.6" width="6" height="6.8" fill="#1f6b41"/><path d="M1.4 3L4.6 7M4.6 3L1.4 7" stroke="#fff" stroke-width="1"/></svg><div class="a" style="left:165px;top:263px;width:1px;height:10px;background:#8ea08c;"></div><svg class="a" style="left:170px;top:262.5px" width="12" height="12" viewBox="0 0 12 12"><circle cx="6" cy="6" r="5.4" fill="#f5c518"/><circle cx="4.2" cy="4.6" r=".8" fill="#5a4500"/><circle cx="7.8" cy="4.6" r=".8" fill="#5a4500"/><path d="M3.2 7C4.4 9.2 7.6 9.2 8.8 7" fill="none" stroke="#5a4500" stroke-width=".8"/></svg><svg class="a" style="left:183px;top:267.5px" width="4" height="3" viewBox="0 0 4 3"><path d="M.3 .5L2 2.2L3.7 .5" fill="none" stroke="#b9c6b7" stroke-width=".7"/></svg><svg class="a" style="left:190px;top:266px" width="6" height="6" viewBox="0 0 6 6"><path d="M.8 .8H5.2" stroke="#2e3c2e" stroke-width="1"/><path d="M.5 2.6H5.5L3 5.4Z" fill="#2e3c2e"/></svg><div class="a" style="left:199px;top:263px;width:1px;height:10px;background:#8ea08c;"></div><div class="s" style="left:205px;top:264.975px;font-size:8.05px;color:#fff;">표1 - Power Query 편집기</div><div class="a" style="left:1015px;top:268px;width:7px;height:1px;background:#84977f;"></div><svg class="a" style="left:1042px;top:264px" width="9" height="9" viewBox="0 0 9 9"><rect x="1" y="1" width="6.5" height="6.5" fill="none" stroke="#fff" stroke-width="1"/></svg><svg class="a" style="left:1070px;top:264px" width="10" height="9" viewBox="0 0 10 9"><path d="M1 .8L8.5 8.2M8.5 .8L1 8.2" stroke="#fff" stroke-width="1"/></svg><div class="a" style="left:145px;top:279px;width:945px;height:15.5px;background:#fff;"></div><div class="a" style="left:145px;top:279px;width:36px;height:14px;background:#1e6fc8;"></div><div class="s" style="left:155.5px;top:282.1px;font-size:8.4px;color:#fff;">파일</div><div class="a" style="left:182px;top:279px;width:24px;height:15px;background:#f6f6f8;border:1px solid #e2e2e2;border-bottom:none"></div><div class="s" style="left:190px;top:282.1px;font-size:8.4px;color:#444;">홈</div><div class="s" style="left:216px;top:282.1px;font-size:8.4px;color:#444;">변환</div><div class="s" style="left:249px;top:282.1px;font-size:8.4px;color:#444;">열 추가</div><div class="s" style="left:292px;top:282.1px;font-size:8.4px;color:#444;">보기</div><svg class="a" style="left:227.6px;top:282.4px" width="10" height="15" viewBox="0 0 8 12"><path d="M.7 .7V9.4L2.9 7.4L4.4 10.8L5.9 10.2L4.4 6.9H7.2Z" fill="#fff" stroke="#222" stroke-width=".65"/></svg><svg class="a" style="left:1064px;top:283px" width="8" height="6" viewBox="0 0 8 6"><path d="M1 4.5L4 1.5L7 4.5" fill="none" stroke="#888" stroke-width=".9"/></svg><div class="a" style="left:1077px;top:280.5px;width:11px;height:11px;border-radius:50%;background:#1565c8;color:#fff;font-size:8.5px;font-weight:bold;line-height:11px;text-align:center">?</div><div class="a" style="left:145px;top:294px;width:945px;height:61px;background:#f6f6f8;border-bottom:1px solid #dadada"></div><div class="a" style="left:181px;top:297px;width:1px;height:54px;background:#e0e0e0;"></div><div class="a" style="left:287px;top:297px;width:1px;height:54px;background:#e0e0e0;"></div><div class="a" style="left:347px;top:297px;width:1px;height:54px;background:#e0e0e0;"></div><div class="a" style="left:407px;top:297px;width:1px;height:54px;background:#e0e0e0;"></div><div class="a" style="left:429px;top:297px;width:1px;height:54px;background:#e0e0e0;"></div><div class="a" style="left:588px;top:297px;width:1px;height:54px;background:#e0e0e0;"></div><div class="a" style="left:650px;top:297px;width:1px;height:54px;background:#e0e0e0;"></div><div class="a" style="left:692px;top:297px;width:1px;height:54px;background:#e0e0e0;"></div><div class="a" style="left:740px;top:297px;width:1px;height:54px;background:#e0e0e0;"></div><div class="a" style="left:803px;top:297px;width:1px;height:54px;background:#e0e0e0;"></div><svg class="a" style="left:152px;top:298px" width="20" height="23" viewBox="0 0 20 23"><path d="M8.5 2.5H14.5L18.5 6.5V21.5H8.5Z" fill="#fff" stroke="#8a8a8a" stroke-width=".8"/><path d="M10.5 9H16.5M10.5 11.5H16.5M10.5 14H16.5M10.5 16.5H16.5" stroke="#b5b5b5" stroke-width=".7"/><rect x="1" y="11.2" width="10" height="10.3" rx=".6" fill="#9b4fc4"/><rect x="3" y="12.4" width="6" height="3.2" fill="#fff"/><rect x="4" y="18.3" width="3" height="3.2" fill="#fff"/><path d="M2.5 9C3.5 5 7.5 4 10.5 5.2V3.2L14.5 6.6L10.5 10V7.6C7.5 6.6 4.5 7.5 2.5 9Z" fill="#2f6fd0"/></svg><div class="s" style="left:103.5px;top:321.5px;font-size:8px;color:#444;width:120px;text-align:center;">닫기 및</div><div class="s" style="left:101px;top:331.5px;font-size:8px;color:#444;width:120px;text-align:center;">로드</div><svg class="a" style="left:169px;top:333.5px" width="5" height="4" viewBox="0 0 5 4"><path d="M0 .5H4L2 3Z" fill="#555"/></svg><div class="s" style="left:103px;top:344.5px;font-size:8px;color:#555;width:120px;text-align:center;">닫기</div><svg class="a" style="left:197px;top:298px" width="22" height="23" viewBox="0 0 22 23"><path d="M3.5 1.5H11.5L15.5 5.5V20.5H3.5Z" fill="#fff" stroke="#8a8a8a" stroke-width=".8"/><path d="M11.5 1.5V5.5H15.5" fill="none" stroke="#8a8a8a" stroke-width=".8"/><path d="M11 15A4.3 4.3 0 0 1 18.6 12.4L19.8 11V15H15.8L17.3 13.6A2.6 2.6 0 0 0 12.8 15Z" fill="#3fae6a"/><path d="M20 16.5A4.3 4.3 0 0 1 12.4 19.1L11.2 20.5V16.5H15.2L13.7 17.9A2.6 2.6 0 0 0 18.2 16.5Z" fill="#3fae6a"/></svg><div class="s" style="left:144.5px;top:321.5px;font-size:8px;color:#444;width:120px;text-align:center;">미리 보기</div><div class="s" style="left:142px;top:331.5px;font-size:8px;color:#444;width:120px;text-align:center;">새로 고침</div><svg class="a" style="left:220.5px;top:333.5px" width="5" height="4" viewBox="0 0 5 4"><path d="M0 .5H4L2 3Z" fill="#555"/></svg><svg class="a" style="left:228px;top:298px" width="11" height="11" viewBox="0 0 11 11"><path d="M1 .8H5.2L7 2.6V9.5H1Z" fill="#fff" stroke="#777" stroke-width=".8"/><rect x="4.2" y="5" width="6" height="5" fill="#fff" stroke="#777" stroke-width=".8"/><rect x="4.2" y="5" width="6" height="1.6" fill="#3d6fb4"/></svg><div class="s" style="left:240px;top:300.5px;font-size:8px;color:#444;">속성</div><svg class="a" style="left:228px;top:312px" width="11" height="11" viewBox="0 0 11 11"><path d="M2.5 1H9.5V8.5H2.5Z" fill="#fff" stroke="#777" stroke-width=".8"/><path d="M4 3H8M4 4.8H8M4 6.6H6.5" stroke="#999" stroke-width=".6"/><path d="M.8 8.5H3.5V10H.8Z" fill="#777"/><path d="M8.5 2.2H10.2V6" fill="none" stroke="#777" stroke-width=".8"/></svg><div class="s" style="left:240px;top:314.5px;font-size:8px;color:#444;">고급 편집기</div><svg class="a" style="left:228px;top:326px" width="11" height="10" viewBox="0 0 11 10"><rect x=".8" y=".8" width="9" height="8" fill="#fff" stroke="#777" stroke-width=".8"/><rect x=".8" y=".8" width="9" height="2.2" fill="#3d6fb4"/><path d="M3.8 3V8.8M6.8 3V8.8M.8 5.8H9.8" stroke="#999" stroke-width=".6"/></svg><div class="s" style="left:240px;top:327.5px;font-size:8px;color:#444;">관리</div><svg class="a" style="left:258px;top:329.5px" width="5" height="4" viewBox="0 0 5 4"><path d="M0 .5H4L2 3Z" fill="#555"/></svg><div class="s" style="left:174px;top:344.5px;font-size:8px;color:#555;width:120px;text-align:center;">쿼리</div><svg class="a" style="left:293px;top:299px" width="21" height="21" viewBox="0 0 21 21"><rect x="1" y="1" width="18.5" height="17.5" fill="#fff" stroke="#9a9a9a" stroke-width=".8"/><rect x="1" y="1" width="9" height="17.5" fill="#c9d6ee"/><path d="M1 4.5H19.5M1 8H19.5M1 11.5H19.5M1 15H19.5M10 1V18.5" stroke="#a8a8a8" stroke-width=".7"/></svg><div class="s" style="left:243px;top:321.5px;font-size:8px;color:#444;width:120px;text-align:center;">열</div><div class="s" style="left:240.5px;top:331.5px;font-size:8px;color:#444;width:120px;text-align:center;">선택</div><svg class="a" style="left:310px;top:333.5px" width="5" height="4" viewBox="0 0 5 4"><path d="M0 .5H4L2 3Z" fill="#555"/></svg><svg class="a" style="left:320px;top:298px" width="21" height="23" viewBox="0 0 21 23"><path d="M2 2V7H19V2" fill="none" stroke="#9a9a9a" stroke-width=".9"/><path d="M7.5 1V7.5L10.5 10.5L13.5 7.5V1Z" fill="#b9c7dc"/><path d="M5 12L16 21.5M16 12L5 21.5" stroke="#e0442e" stroke-width="1.7"/></svg><div class="s" style="left:270px;top:321.5px;font-size:8px;color:#444;width:120px;text-align:center;">열</div><div class="s" style="left:267.5px;top:331.5px;font-size:8px;color:#444;width:120px;text-align:center;">제거</div><svg class="a" style="left:337px;top:333.5px" width="5" height="4" viewBox="0 0 5 4"><path d="M0 .5H4L2 3Z" fill="#555"/></svg><div class="s" style="left:256px;top:344.5px;font-size:8px;color:#555;width:120px;text-align:center;">열 관리</div><svg class="a" style="left:354px;top:299px" width="20" height="21" viewBox="0 0 20 21"><rect x="1" y="1.5" width="17" height="4.6" fill="#3d6fb4"/><rect x="1" y="8" width="17" height="10.5" fill="#fff" stroke="#8a8a8a" stroke-width=".8"/><path d="M1 13.2H18M6.6 8V18.5M12.3 8V18.5" stroke="#8a8a8a" stroke-width=".7"/><path d="M11 3L13.5 6L18.5 .5" fill="none" stroke="#2fa05a" stroke-width="1.3"/></svg><div class="s" style="left:303px;top:321.5px;font-size:8px;color:#444;width:120px;text-align:center;">행</div><div class="s" style="left:300.5px;top:331.5px;font-size:8px;color:#444;width:120px;text-align:center;">유지</div><svg class="a" style="left:370px;top:333.5px" width="5" height="4" viewBox="0 0 5 4"><path d="M0 .5H4L2 3Z" fill="#555"/></svg><svg class="a" style="left:380px;top:299px" width="20" height="21" viewBox="0 0 20 21"><rect x="1" y="1.5" width="17" height="4.6" fill="#3d6fb4"/><rect x="1" y="8" width="17" height="10.5" fill="#fff" stroke="#8a8a8a" stroke-width=".8"/><path d="M1 13.2H18M6.6 8V18.5M12.3 8V18.5" stroke="#8a8a8a" stroke-width=".7"/><path d="M12.5 .8L18.5 6.2M18.5 .8L12.5 6.2" stroke="#e0442e" stroke-width="1.2"/></svg><div class="s" style="left:329.5px;top:321.5px;font-size:8px;color:#444;width:120px;text-align:center;">행</div><div class="s" style="left:327px;top:331.5px;font-size:8px;color:#444;width:120px;text-align:center;">제거</div><svg class="a" style="left:397px;top:333.5px" width="5" height="4" viewBox="0 0 5 4"><path d="M0 .5H4L2 3Z" fill="#555"/></svg><div class="s" style="left:316px;top:344.5px;font-size:8px;color:#555;width:120px;text-align:center;">행 감소</div><svg class="a" style="left:412px;top:297px" width="12" height="12" viewBox="0 0 12 12"><text x="0" y="5" font-size="5" fill="#3d6fb4" font-family="Liberation Sans,sans-serif">A</text><text x="0" y="11" font-size="5" fill="#9b4fc4" font-family="Liberation Sans,sans-serif">Z</text><path d="M8.5 1V10.5M6.5 8.3L8.5 10.8L10.5 8.3" fill="none" stroke="#666" stroke-width=".9"/></svg><svg class="a" style="left:412px;top:311px" width="12" height="12" viewBox="0 0 12 12"><text x="0" y="5" font-size="5" fill="#9b4fc4" font-family="Liberation Sans,sans-serif">Z</text><text x="0" y="11" font-size="5" fill="#3d6fb4" font-family="Liberation Sans,sans-serif">A</text><path d="M8.5 1V10.5M6.5 8.3L8.5 10.8L10.5 8.3" fill="none" stroke="#666" stroke-width=".9"/></svg><div class="s" style="left:358px;top:344.5px;font-size:8px;color:#555;width:120px;text-align:center;">정렬</div><svg class="a" style="left:435px;top:299px" width="22" height="21" viewBox="0 0 22 21"><path d="M2 18V9H7V18" fill="none" stroke="#9a9a9a" stroke-width=".9"/><path d="M14 18V9H19V18" fill="none" stroke="#9a9a9a" stroke-width=".9"/><rect x="8" y="2.5" width="5" height="15.5" fill="#c5d3ea" stroke="#9aaed0" stroke-width=".7"/><path d="M10.5 0V3" stroke="#3d6fb4" stroke-width="1"/></svg><div class="s" style="left:385.5px;top:321.5px;font-size:8px;color:#444;width:120px;text-align:center;">열</div><div class="s" style="left:383px;top:331.5px;font-size:8px;color:#444;width:120px;text-align:center;">분할</div><svg class="a" style="left:452.5px;top:333.5px" width="5" height="4" viewBox="0 0 5 4"><path d="M0 .5H4L2 3Z" fill="#555"/></svg><svg class="a" style="left:461px;top:301px" width="22" height="18" viewBox="0 0 22 18"><rect x="1.5" y="1.5" width="12.5" height="4" fill="#fff" stroke="#9a9a9a" stroke-width=".9"/><rect x="7" y="11" width="12.5" height="4" fill="#fff" stroke="#9a9a9a" stroke-width=".9"/><path d="M7.5 5.5L13 11" stroke="#9a9a9a" stroke-width=".9"/></svg><div class="s" style="left:411px;top:321.5px;font-size:8px;color:#444;width:120px;text-align:center;">그룹화</div><div class="s" style="left:488px;top:299.5px;font-size:8px;color:#444;">데이터 형식: 텍스트</div><svg class="a" style="left:556.5px;top:301.5px" width="5" height="4" viewBox="0 0 5 4"><path d="M0 .5H4L2 3Z" fill="#555"/></svg><svg class="a" style="left:488px;top:312px" width="10" height="10" viewBox="0 0 10 10"><rect x=".7" y=".7" width="8.6" height="8.6" fill="#fff" stroke="#777" stroke-width=".8"/><rect x=".7" y=".7" width="8.6" height="2.4" fill="#555"/><path d="M3.5 3V9.3M6.5 3V9.3M.7 6.2H9.3" stroke="#999" stroke-width=".6"/></svg><div class="s" style="left:500px;top:313.5px;font-size:8px;color:#444;">첫 행을 머리글로 사용</div><svg class="a" style="left:577px;top:315.5px" width="5" height="4" viewBox="0 0 5 4"><path d="M0 .5H4L2 3Z" fill="#555"/></svg><svg class="a" style="left:488px;top:325px" width="11" height="11" viewBox="0 0 11 11"><text x="0" y="4.5" font-size="4.5" fill="#444" font-family="Liberation Sans,sans-serif">1</text><text x="6.6" y="10.5" font-size="4.5" fill="#444" font-family="Liberation Sans,sans-serif">2</text><path d="M1.5 5.5V8H6M4.5 6.3L6.2 8L4.5 9.7" fill="none" stroke="#3d6fb4" stroke-width=".9"/></svg><div class="s" style="left:500px;top:327.5px;font-size:8px;color:#444;">값 바꾸기</div><div class="s" style="left:448px;top:344.5px;font-size:8px;color:#555;width:120px;text-align:center;">변환</div><svg class="a" style="left:593px;top:298px" width="11" height="11" viewBox="0 0 11 11"><rect x=".7" y=".7" width="7" height="5" fill="#fff" stroke="#777" stroke-width=".8"/><rect x=".7" y=".7" width="7" height="1.6" fill="#3d6fb4"/><rect x="3.5" y="5" width="7" height="5" fill="#fff" stroke="#777" stroke-width=".8"/><path d="M1 8.5H3M2 7.5L3 8.5L2 9.5" stroke="#3d6fb4" stroke-width=".7" fill="none"/></svg><div class="s" style="left:605px;top:299.5px;font-size:8px;color:#444;">쿼리 병합</div><svg class="a" style="left:640px;top:301.5px" width="5" height="4" viewBox="0 0 5 4"><path d="M0 .5H4L2 3Z" fill="#555"/></svg><svg class="a" style="left:593px;top:312px" width="11" height="11" viewBox="0 0 11 11"><rect x=".7" y=".7" width="9.6" height="2.6" fill="#fff" stroke="#777" stroke-width=".8"/><path d="M5.5 3.3V6.5" stroke="#777" stroke-width=".8"/><rect x=".7" y="6.5" width="3.6" height="3.6" fill="#fff" stroke="#777" stroke-width=".8"/><rect x="6.7" y="6.5" width="3.6" height="3.6" fill="#fff" stroke="#777" stroke-width=".8"/><path d="M2.5 6.5V5H8.5V6.5" fill="none" stroke="#777" stroke-width=".7"/></svg><div class="s" style="left:605px;top:313.5px;font-size:8px;color:#444;">쿼리 추가</div><svg class="a" style="left:640px;top:315.5px" width="5" height="4" viewBox="0 0 5 4"><path d="M0 .5H4L2 3Z" fill="#555"/></svg><svg class="a" style="left:593px;top:326px" width="11" height="10" viewBox="0 0 11 10"><rect x=".7" y=".7" width="9.2" height="8.2" fill="#fff" stroke="#b9b9cc" stroke-width=".8"/><path d="M3 2.5V6.5M7 2.5V6.5M1.8 5.5L3 6.8L4.2 5.5M5.8 5.5L7 6.8L8.2 5.5" fill="none" stroke="#b9b9cc" stroke-width=".7"/></svg><div class="s" style="left:605px;top:327.5px;font-size:8px;color:#a9a9a9;">파일 병합</div><div class="s" style="left:559px;top:344.5px;font-size:8px;color:#555;width:120px;text-align:center;">결합</div><svg class="a" style="left:661px;top:299px" width="20" height="21" viewBox="0 0 20 21"><rect x="1.5" y="1" width="16.5" height="19" fill="#fff" stroke="#9a9a9a" stroke-width=".8"/><rect x="4" y="4" width="4" height="3.4" fill="none" stroke="#9aaed0" stroke-width=".8"/><rect x="4" y="9" width="4" height="3.4" fill="none" stroke="#9aaed0" stroke-width=".8"/><rect x="4" y="14" width="4" height="3.4" fill="none" stroke="#9aaed0" stroke-width=".8"/><rect x="10" y="4" width="5.6" height="3.4" fill="none" stroke="#9a9a9a" stroke-width=".8"/><rect x="10" y="9" width="5.6" height="3.4" fill="none" stroke="#9a9a9a" stroke-width=".8"/><rect x="10" y="14" width="5.6" height="3.4" fill="none" stroke="#9a9a9a" stroke-width=".8"/></svg><div class="s" style="left:611px;top:321.5px;font-size:8px;color:#444;width:120px;text-align:center;">매개 변수</div><div class="s" style="left:608.5px;top:331.5px;font-size:8px;color:#444;width:120px;text-align:center;">관리</div><svg class="a" style="left:678px;top:333.5px" width="5" height="4" viewBox="0 0 5 4"><path d="M0 .5H4L2 3Z" fill="#555"/></svg><div class="s" style="left:611px;top:344.5px;font-size:8px;color:#555;width:120px;text-align:center;">매개 변수</div><svg class="a" style="left:706px;top:298px" width="23" height="23" viewBox="0 0 23 23"><path d="M3.5 1.5H11.5L15.5 5.5V20.5H3.5Z" fill="#fff" stroke="#8a8a8a" stroke-width=".8"/><path d="M11.5 1.5V5.5H15.5" fill="none" stroke="#8a8a8a" stroke-width=".8"/><circle cx="16" cy="15.5" r="3.2" fill="none" stroke="#e8862e" stroke-width="2.2"/><path d="M16 10.3V12M16 19V20.7M10.8 15.5H12.5M19.5 15.5H21.2M12.3 11.8L13.5 13M18.5 18L19.7 19.2M19.7 11.8L18.5 13M13.5 18L12.3 19.2" stroke="#e8862e" stroke-width="1.5"/></svg><div class="s" style="left:656.5px;top:321.5px;font-size:8px;color:#444;width:120px;text-align:center;">데이터</div><div class="s" style="left:656.5px;top:331.5px;font-size:8px;color:#444;width:120px;text-align:center;">원본 설정</div><div class="s" style="left:656.5px;top:344.5px;font-size:8px;color:#555;width:120px;text-align:center;">데이터 원본</div><svg class="a" style="left:746px;top:298px" width="11" height="11" viewBox="0 0 11 11"><path d="M1 .8H5.5L7.5 2.8V9.8H1Z" fill="#fff" stroke="#777" stroke-width=".8"/><rect x="5" y="4.6" width="4.6" height="5.2" fill="#f3d18a" stroke="#c9a040" stroke-width=".5"/></svg><div class="s" style="left:758px;top:299.5px;font-size:8px;color:#444;">새 원본</div><svg class="a" style="left:786px;top:301.5px" width="5" height="4" viewBox="0 0 5 4"><path d="M0 .5H4L2 3Z" fill="#555"/></svg><svg class="a" style="left:746px;top:312px" width="11" height="11" viewBox="0 0 11 11"><path d="M1 .8H5.5L7.5 2.8V9.8H1Z" fill="#fff" stroke="#777" stroke-width=".8"/><circle cx="7.4" cy="7.6" r="2.6" fill="#fff" stroke="#3d6fb4" stroke-width=".8"/><path d="M7.4 6.2V7.6H8.6" fill="none" stroke="#3d6fb4" stroke-width=".7"/></svg><div class="s" style="left:758px;top:313.5px;font-size:8px;color:#444;">최근 원본</div><svg class="a" style="left:794px;top:315.5px" width="5" height="4" viewBox="0 0 5 4"><path d="M0 .5H4L2 3Z" fill="#555"/></svg><div class="s" style="left:711px;top:344.5px;font-size:8px;color:#555;width:120px;text-align:center;">새 쿼리</div><div class="a" style="left:145px;top:355px;width:945px;height:526px;background:#e4e4e4;"></div><div class="a" style="left:145px;top:355px;width:25px;height:526px;background:#ebebeb;border-right:1px solid #d6d6d6"></div><svg class="a" style="left:155px;top:366.5px" width="6" height="8" viewBox="0 0 6 8"><path d="M1.2 .8L4.8 4L1.2 7.2" fill="none" stroke="#444" stroke-width="1.1"/></svg><div class="s" style="left:148px;top:387px;width:18px;text-align:center;font-size:8px;color:#4f8a68;transform:rotate(-90deg);transform-origin:50% 50%">쿼리</div><div class="a" style="left:173.3px;top:362px;width:70px;height:17.5px;background:#fff;border:1px solid #c9c9c9"></div><svg class="a" style="left:181px;top:365.5px" width="11" height="11" viewBox="0 0 11 11"><path d="M1.5 1.5L9.5 9.5M9.5 1.5L1.5 9.5" stroke="#c2c2c2" stroke-width="1"/></svg><svg class="a" style="left:204px;top:365.5px" width="12" height="11" viewBox="0 0 12 11"><path d="M1.5 6L4.5 9.5L10.5 1.5" fill="none" stroke="#c2c2c2" stroke-width="1"/></svg><div class="s" style="left:227px;top:365.5px;font-size:11px;color:#555;font-family:'Liberation Serif',serif"><i>f</i><span style="font-size:7px">x</span></div><div class="a" style="left:246px;top:362px;width:673.5px;height:17.5px;background:#fff;border:1px solid #c9c9c9"></div><div class="s" style="left:250px;top:367.39px;font-size:7.22px;color:#444;font-family:'Liberation Mono','Noto Sans CJK KR',monospace;letter-spacing:-.06px">= Table.ReplaceValue(#"이름을 바꾼 열 수","TX","Texas",Replacer.ReplaceText,{"State/City"})</div><svg class="a" style="left:906px;top:367px" width="10" height="7" viewBox="0 0 10 7"><path d="M1 1.2L5 5.2L9 1.2" fill="none" stroke="#444" stroke-width="1.2"/></svg><div class="a" style="left:173.5px;top:383px;width:746.5px;height:487px;background:#fff;"></div><div class="a" style="left:173.5px;top:383px;width:746.5px;height:13.5px;background:#e9e9e9;border-bottom:1px solid #c8c8c8;border-top:1px solid #d0d0d0"></div><div class="a" style="left:511px;top:383px;width:88px;height:13.5px;background:#a3d5b8;"></div><div class="a" style="left:511px;top:396.5px;width:88px;height:473.5px;background:#d3ecde;"></div><svg class="a" style="left:176.5px;top:385px" width="12" height="10" viewBox="0 0 12 10"><rect x=".7" y=".7" width="7.6" height="7.6" fill="#fff" stroke="#6b7f9c" stroke-width=".8"/><rect x=".7" y=".7" width="7.6" height="2" fill="#3d6fb4"/><path d="M3.2 2.7V8.3M5.8 2.7V8.3M.7 5.5H8.3" stroke="#8a9ab5" stroke-width=".5"/><path d="M9 6.5H11.6L10.3 8.2Z" fill="#555"/></svg><div class="a" style="left:192px;top:383px;width:1px;height:13.5px;background:#cfcfcf;"></div><div class="s" style="left:194px;top:385.5px;font-size:7.6px;color:#444;letter-spacing:-.2px">1<span style="position:relative;top:-2px;font-size:6px">2</span><span style="position:relative;top:1px;font-size:7px">3</span></div><div class="s" style="left:207.5px;top:386px;font-size:7.3px;color:#333;font-weight:bold;letter-spacing:-.35px">ProductID</div><div class="a" style="left:255.5px;top:385px;width:9px;height:9.5px;background:#fff;border:1px solid #b8b8b8"></div><svg class="a" style="left:257.5px;top:388px" width="6" height="4" viewBox="0 0 6 4"><path d="M.3 .5H4.7L2.5 3.2Z" fill="#444"/></svg><div class="a" style="left:266px;top:383px;width:1px;height:13.5px;background:#cfcfcf;"></div><svg class="a" style="left:268px;top:385px" width="10" height="10" viewBox="0 0 10 10"><rect x=".6" y=".6" width="8.6" height="8.4" fill="#fff" stroke="#666" stroke-width=".8"/><rect x=".6" y=".6" width="8.6" height="2" fill="#666"/><path d="M3.4 2.6V9M6.2 2.6V9M.6 4.8H9.2M.6 7H9.2" stroke="#999" stroke-width=".5"/></svg><div class="s" style="left:281.5px;top:386px;font-size:7.3px;color:#333;font-weight:bold;letter-spacing:-.35px">Date</div><div class="a" style="left:314.5px;top:385px;width:9px;height:9.5px;background:#fff;border:1px solid #b8b8b8"></div><svg class="a" style="left:316.5px;top:388px" width="6" height="4" viewBox="0 0 6 4"><path d="M.3 .5H4.7L2.5 3.2Z" fill="#444"/></svg><div class="a" style="left:325px;top:383px;width:1px;height:13.5px;background:#cfcfcf;"></div><div class="s" style="left:327px;top:385.5px;font-size:7.6px;color:#444;letter-spacing:-.2px">1<span style="position:relative;top:-2px;font-size:6px">2</span><span style="position:relative;top:1px;font-size:7px">3</span></div><div class="s" style="left:340.5px;top:386px;font-size:7.3px;color:#333;font-weight:bold;letter-spacing:-.35px">Zip</div><div class="a" style="left:370.5px;top:385px;width:9px;height:9.5px;background:#fff;border:1px solid #b8b8b8"></div><svg class="a" style="left:372.5px;top:388px" width="6" height="4" viewBox="0 0 6 4"><path d="M.3 .5H4.7L2.5 3.2Z" fill="#444"/></svg><div class="a" style="left:381px;top:383px;width:1px;height:13.5px;background:#cfcfcf;"></div><div class="s" style="left:383px;top:385.5px;font-size:7.6px;color:#444;letter-spacing:-.2px">1<span style="position:relative;top:-2px;font-size:6px">2</span><span style="position:relative;top:1px;font-size:7px">3</span></div><div class="s" style="left:396.5px;top:386px;font-size:7.3px;color:#333;font-weight:bold;letter-spacing:-.35px">Units</div><div class="a" style="left:432.5px;top:385px;width:9px;height:9.5px;background:#fff;border:1px solid #b8b8b8"></div><svg class="a" style="left:434.5px;top:388px" width="6" height="4" viewBox="0 0 6 4"><path d="M.3 .5H4.7L2.5 3.2Z" fill="#444"/></svg><div class="a" style="left:443px;top:383px;width:1px;height:13.5px;background:#cfcfcf;"></div><div class="s" style="left:445px;top:385.5px;font-size:8.2px;color:#555">1.2</div><div class="s" style="left:458.5px;top:386px;font-size:7.3px;color:#333;font-weight:bold;letter-spacing:-.35px">Revenue</div><div class="a" style="left:500.5px;top:385px;width:9px;height:9.5px;background:#fff;border:1px solid #b8b8b8"></div><svg class="a" style="left:502.5px;top:388px" width="6" height="4" viewBox="0 0 6 4"><path d="M.3 .5H4.7L2.5 3.2Z" fill="#444"/></svg><div class="a" style="left:511px;top:383px;width:1px;height:13.5px;background:#cfcfcf;"></div><div class="s" style="left:512.3px;top:386px;font-size:8.3px;color:#484848">A<span style="position:absolute;left:5.3px;top:-2px;font-size:5.8px">B</span><span style="position:absolute;left:7px;top:3.2px;font-size:6.2px">C</span></div><div class="s" style="left:526.5px;top:386px;font-size:7.3px;color:#333;font-weight:bold;letter-spacing:-.35px">State/City</div><div class="a" style="left:588.5px;top:385px;width:9px;height:9.5px;background:#fff;border:1px solid #b8b8b8"></div><svg class="a" style="left:590.5px;top:388px" width="6" height="4" viewBox="0 0 6 4"><path d="M.3 .5H4.7L2.5 3.2Z" fill="#444"/></svg><div class="a" style="left:599px;top:383px;width:1px;height:13.5px;background:#cfcfcf;"></div><div class="s" style="left:600.3px;top:386px;font-size:8.3px;color:#484848">A<span style="position:absolute;left:5.3px;top:-2px;font-size:5.8px">B</span><span style="position:absolute;left:7px;top:3.2px;font-size:6.2px">C</span></div><div class="s" style="left:614.5px;top:386px;font-size:7.3px;color:#333;font-weight:bold;letter-spacing:-.35px">Region</div><div class="a" style="left:653.5px;top:385px;width:9px;height:9.5px;background:#fff;border:1px solid #b8b8b8"></div><svg class="a" style="left:655.5px;top:388px" width="6" height="4" viewBox="0 0 6 4"><path d="M.3 .5H4.7L2.5 3.2Z" fill="#444"/></svg><div class="a" style="left:664px;top:383px;width:1px;height:13.5px;background:#cfcfcf;"></div><div class="s" style="left:665.3px;top:386px;font-size:8.3px;color:#484848">A<span style="position:absolute;left:5.3px;top:-2px;font-size:5.8px">B</span><span style="position:absolute;left:7px;top:3.2px;font-size:6.2px">C</span></div><div class="s" style="left:679.5px;top:386px;font-size:7.3px;color:#333;font-weight:bold;letter-spacing:-.35px">District</div><div class="a" style="left:725.5px;top:385px;width:9px;height:9.5px;background:#fff;border:1px solid #b8b8b8"></div><svg class="a" style="left:727.5px;top:388px" width="6" height="4" viewBox="0 0 6 4"><path d="M.3 .5H4.7L2.5 3.2Z" fill="#444"/></svg><div class="a" style="left:736px;top:383px;width:1px;height:13.5px;background:#cfcfcf;"></div><div class="s" style="left:737.3px;top:386px;font-size:8.3px;color:#484848">A<span style="position:absolute;left:5.3px;top:-2px;font-size:5.8px">B</span><span style="position:absolute;left:7px;top:3.2px;font-size:6.2px">C</span></div><div class="s" style="left:751.5px;top:386px;font-size:7.3px;color:#333;font-weight:bold;letter-spacing:-.35px">Country</div><div class="a" style="left:793.5px;top:385px;width:9px;height:9.5px;background:#fff;border:1px solid #b8b8b8"></div><svg class="a" style="left:795.5px;top:388px" width="6" height="4" viewBox="0 0 6 4"><path d="M.3 .5H4.7L2.5 3.2Z" fill="#444"/></svg><div class="a" style="left:804px;top:383px;width:1px;height:13.5px;background:#cfcfcf;"></div><div class="s" style="left:805.3px;top:386px;font-size:8.3px;color:#484848">A<span style="position:absolute;left:5.3px;top:-2px;font-size:5.8px">B</span><span style="position:absolute;left:7px;top:3.2px;font-size:6.2px">C</span></div><div class="s" style="left:819.5px;top:386px;font-size:7.3px;color:#333;font-weight:bold;letter-spacing:-.35px">Manufacturer</div><div class="a" style="left:877.5px;top:385px;width:9px;height:9.5px;background:#fff;border:1px solid #b8b8b8"></div><svg class="a" style="left:879.5px;top:388px" width="6" height="4" viewBox="0 0 6 4"><path d="M.3 .5H4.7L2.5 3.2Z" fill="#444"/></svg><div class="a" style="left:888px;top:383px;width:1px;height:13.5px;background:#cfcfcf;"></div><div class="s" style="left:889.3px;top:386px;font-size:8.3px;color:#484848">A<span style="position:absolute;left:5.3px;top:-2px;font-size:5.8px">B</span><span style="position:absolute;left:7px;top:3.2px;font-size:6.2px">C</span></div><div class="s" style="left:903.5px;top:386px;font-size:7.3px;color:#333;font-weight:bold;letter-spacing:-.35px">IsCor</div><div class="a" style="left:173.5px;top:396.7px;width:735.5px;height:473.3px;overflow:hidden"><div class="row" style="left:0;top:0.00px;border-bottom:1px solid #dedede;height:13.30px"><div class="cell" style="left:0;width:18.5px;text-align:center;background:#ececec;border-right:1px solid #cfcfcf;font-size:8.2px;color:#555;height:13.3px;line-height:13px">1</div><div class="cell num" style="left:18.5px;width:72.2px">580</div><div class="cell num" style="left:92.5px;width:57.2px">2015-01-02</div><div class="cell num" style="left:151.5px;width:54.2px">78758</div><div class="cell num" style="left:207.5px;width:60.2px">1</div><div class="cell num" style="left:269.5px;width:66.2px">834.4875</div><div class="cell" style="left:340.5px;width:85px">Texas/Austin</div><div class="cell" style="left:428.5px;width:62px">Central</div><div class="cell" style="left:493.5px;width:69px">District #23</div><div class="cell" style="left:565.5px;width:65px">USA</div><div class="cell" style="left:633.5px;width:81px">VanArsdel</div><div class="cell" style="left:717.5px;width:29px">N</div></div><div class="row" style="left:0;top:13.30px;border-bottom:1px solid #dedede;height:13.30px"><div class="cell" style="left:0;width:18.5px;text-align:center;background:#ececec;border-right:1px solid #cfcfcf;font-size:8.2px;color:#555;height:13.3px;line-height:13px">2</div><div class="cell num" style="left:18.5px;width:72.2px">559</div><div class="cell num" style="left:92.5px;width:57.2px">2015-01-02</div><div class="cell num" style="left:151.5px;width:54.2px">76209</div><div class="cell num" style="left:207.5px;width:60.2px">1</div><div class="cell num" style="left:269.5px;width:66.2px">629.9475</div><div class="cell" style="left:340.5px;width:85px">Texas/Denton</div><div class="cell" style="left:428.5px;width:62px">Central</div><div class="cell" style="left:493.5px;width:69px">District #22</div><div class="cell" style="left:565.5px;width:65px">USA</div><div class="cell" style="left:633.5px;width:81px">VanArsdel</div><div class="cell" style="left:717.5px;width:29px">N</div></div><div class="row" style="left:0;top:26.60px;border-bottom:1px solid #dedede;height:13.30px"><div class="cell" style="left:0;width:18.5px;text-align:center;background:#ececec;border-right:1px solid #cfcfcf;font-size:8.2px;color:#555;height:13.3px;line-height:13px">3</div><div class="cell num" style="left:18.5px;width:72.2px">596</div><div class="cell num" style="left:92.5px;width:57.2px">2015-01-02</div><div class="cell num" style="left:151.5px;width:54.2px">79763</div><div class="cell num" style="left:207.5px;width:60.2px">1</div><div class="cell num" style="left:269.5px;width:66.2px">766.2375</div><div class="cell" style="left:340.5px;width:85px">Texas/Odessa</div><div class="cell" style="left:428.5px;width:62px">Central</div><div class="cell" style="left:493.5px;width:69px">District #22</div><div class="cell" style="left:565.5px;width:65px">USA</div><div class="cell" style="left:633.5px;width:81px">VanArsdel</div><div class="cell" style="left:717.5px;width:29px">N</div></div><div class="row" style="left:0;top:39.90px;border-bottom:1px solid #dedede;height:13.30px"><div class="cell" style="left:0;width:18.5px;text-align:center;background:#ececec;border-right:1px solid #cfcfcf;font-size:8.2px;color:#555;height:13.3px;line-height:13px">4</div><div class="cell num" style="left:18.5px;width:72.2px">2064</div><div class="cell num" style="left:92.5px;width:57.2px">2015-01-02</div><div class="cell num" style="left:151.5px;width:54.2px">11758</div><div class="cell num" style="left:207.5px;width:60.2px">1</div><div class="cell num" style="left:269.5px;width:66.2px">577.4475</div><div class="cell" style="left:340.5px;width:85px">NY/Massapequa</div><div class="cell" style="left:428.5px;width:62px">East</div><div class="cell" style="left:493.5px;width:69px">District #03</div><div class="cell" style="left:565.5px;width:65px">USA</div><div class="cell" style="left:633.5px;width:81px">Currus</div><div class="cell" style="left:717.5px;width:29px">N</div></div><div class="row" style="left:0;top:53.20px;border-bottom:1px solid #dedede;height:13.30px"><div class="cell" style="left:0;width:18.5px;text-align:center;background:#ececec;border-right:1px solid #cfcfcf;font-size:8.2px;color:#555;height:13.3px;line-height:13px">5</div><div class="cell num" style="left:18.5px;width:72.2px">2055</div><div class="cell num" style="left:92.5px;width:57.2px">2015-01-02</div><div class="cell num" style="left:151.5px;width:54.2px">78610</div><div class="cell num" style="left:207.5px;width:60.2px">1</div><div class="cell num" style="left:269.5px;width:66.2px">656.1975</div><div class="cell" style="left:340.5px;width:85px">Texas/Buda</div><div class="cell" style="left:428.5px;width:62px">Central</div><div class="cell" style="left:493.5px;width:69px">District #23</div><div class="cell" style="left:565.5px;width:65px">USA</div><div class="cell" style="left:633.5px;width:81px">Currus</div><div class="cell" style="left:717.5px;width:29px">N</div></div><div class="row" style="left:0;top:66.50px;border-bottom:1px solid #dedede;height:13.30px"><div class="cell" style="left:0;width:18.5px;text-align:center;background:#ececec;border-right:1px solid #cfcfcf;font-size:8.2px;color:#555;height:13.3px;line-height:13px">6</div><div class="cell num" style="left:18.5px;width:72.2px">2169</div><div class="cell num" style="left:92.5px;width:57.2px">2015-01-02</div><div class="cell num" style="left:151.5px;width:54.2px">10976</div><div class="cell num" style="left:207.5px;width:60.2px">1</div><div class="cell num" style="left:269.5px;width:66.2px">593.1975</div><div class="cell" style="left:340.5px;width:85px">NY/Sparkill</div><div class="cell" style="left:428.5px;width:62px">East</div><div class="cell" style="left:493.5px;width:69px">District #03</div><div class="cell" style="left:565.5px;width:65px">USA</div><div class="cell" style="left:633.5px;width:81px">Victoria</div><div class="cell" style="left:717.5px;width:29px">N</div></div><div class="row" style="left:0;top:79.80px;border-bottom:1px solid #dedede;height:13.30px"><div class="cell" style="left:0;width:18.5px;text-align:center;background:#ececec;border-right:1px solid #cfcfcf;font-size:8.2px;color:#555;height:13.3px;line-height:13px">7</div><div class="cell num" style="left:18.5px;width:72.2px">599</div><div class="cell num" style="left:92.5px;width:57.2px">2015-01-04</div><div class="cell num" style="left:151.5px;width:54.2px">78245</div><div class="cell num" style="left:207.5px;width:60.2px">1</div><div class="cell num" style="left:269.5px;width:66.2px">886.9875</div><div class="cell" style="left:340.5px;width:85px">Texas/San Antonio</div><div class="cell" style="left:428.5px;width:62px">Central</div><div class="cell" style="left:493.5px;width:69px">District #23</div><div class="cell" style="left:565.5px;width:65px">USA</div><div class="cell" style="left:633.5px;width:81px">VanArsdel</div><div class="cell" style="left:717.5px;width:29px">N</div></div><div class="row" style="left:0;top:93.10px;border-bottom:1px solid #dedede;height:13.30px"><div class="cell" style="left:0;width:18.5px;text-align:center;background:#ececec;border-right:1px solid #cfcfcf;font-size:8.2px;color:#555;height:13.3px;line-height:13px">8</div><div class="cell num" style="left:18.5px;width:72.2px">596</div><div class="cell num" style="left:92.5px;width:57.2px">2015-01-04</div><div class="cell num" style="left:151.5px;width:54.2px">78521</div><div class="cell num" style="left:207.5px;width:60.2px">1</div><div class="cell num" style="left:269.5px;width:66.2px">766.2375</div><div class="cell" style="left:340.5px;width:85px">Texas/Brownsville</div><div class="cell" style="left:428.5px;width:62px">Central</div><div class="cell" style="left:493.5px;width:69px">District #23</div><div class="cell" style="left:565.5px;width:65px">USA</div><div class="cell" style="left:633.5px;width:81px">VanArsdel</div><div class="cell" style="left:717.5px;width:29px">N</div></div><div class="row" style="left:0;top:106.40px;border-bottom:1px solid #dedede;height:13.30px"><div class="cell" style="left:0;width:18.5px;text-align:center;background:#ececec;border-right:1px solid #cfcfcf;font-size:8.2px;color:#555;height:13.3px;line-height:13px">9</div><div class="cell num" style="left:18.5px;width:72.2px">604</div><div class="cell num" style="left:92.5px;width:57.2px">2015-01-04</div><div class="cell num" style="left:151.5px;width:54.2px">77320</div><div class="cell num" style="left:207.5px;width:60.2px">1</div><div class="cell num" style="left:269.5px;width:66.2px">524.9475</div><div class="cell" style="left:340.5px;width:85px">Texas/Huntsville</div><div class="cell" style="left:428.5px;width:62px">Central</div><div class="cell" style="left:493.5px;width:69px">District #23</div><div class="cell" style="left:565.5px;width:65px">USA</div><div class="cell" style="left:633.5px;width:81px">VanArsdel</div><div class="cell" style="left:717.5px;width:29px">N</div></div><div class="row" style="left:0;top:119.70px;border-bottom:1px solid #dedede;height:13.30px"><div class="cell" style="left:0;width:18.5px;text-align:center;background:#ececec;border-right:1px solid #cfcfcf;font-size:8.2px;color:#555;height:13.3px;line-height:13px">10</div><div class="cell num" style="left:18.5px;width:72.2px">559</div><div class="cell num" style="left:92.5px;width:57.2px">2015-01-04</div><div class="cell num" style="left:151.5px;width:54.2px">76133</div><div class="cell num" style="left:207.5px;width:60.2px">1</div><div class="cell num" style="left:269.5px;width:66.2px">629.9475</div><div class="cell" style="left:340.5px;width:85px">Texas/Fort Worth</div><div class="cell" style="left:428.5px;width:62px">Central</div><div class="cell" style="left:493.5px;width:69px">District #22</div><div class="cell" style="left:565.5px;width:65px">USA</div><div class="cell" style="left:633.5px;width:81px">VanArsdel</div><div class="cell" style="left:717.5px;width:29px">N</div></div><div class="row" style="left:0;top:133.00px;border-bottom:1px solid #dedede;height:13.30px"><div class="cell" style="left:0;width:18.5px;text-align:center;background:#ececec;border-right:1px solid #cfcfcf;font-size:8.2px;color:#555;height:13.3px;line-height:13px">11</div><div class="cell num" style="left:18.5px;width:72.2px">676</div><div class="cell num" style="left:92.5px;width:57.2px">2015-01-04</div><div class="cell num" style="left:151.5px;width:54.2px">76087</div><div class="cell num" style="left:207.5px;width:60.2px">1</div><div class="cell num" style="left:269.5px;width:66.2px">761.1975</div><div class="cell" style="left:340.5px;width:85px">Texas/Weatherford</div><div class="cell" style="left:428.5px;width:62px">Central</div><div class="cell" style="left:493.5px;width:69px">District #22</div><div class="cell" style="left:565.5px;width:65px">USA</div><div class="cell" style="left:633.5px;width:81px">VanArsdel</div><div class="cell" style="left:717.5px;width:29px">N</div></div><div class="row" style="left:0;top:146.30px;border-bottom:1px solid #dedede;height:13.30px"><div class="cell" style="left:0;width:18.5px;text-align:center;background:#ececec;border-right:1px solid #cfcfcf;font-size:8.2px;color:#555;height:13.3px;line-height:13px">12</div><div class="cell num" style="left:18.5px;width:72.2px">426</div><div class="cell num" style="left:92.5px;width:57.2px">2015-01-04</div><div class="cell num" style="left:151.5px;width:54.2px">75063</div><div class="cell num" style="left:207.5px;width:60.2px">1</div><div class="cell num" style="left:269.5px;width:66.2px">976.4475</div><div class="cell" style="left:340.5px;width:85px">Texas/Irving</div><div class="cell" style="left:428.5px;width:62px">Central</div><div class="cell" style="left:493.5px;width:69px">District #22</div><div class="cell" style="left:565.5px;width:65px">USA</div><div class="cell" style="left:633.5px;width:81px">VanArsdel</div><div class="cell" style="left:717.5px;width:29px">Y</div></div><div class="row" style="left:0;top:159.60px;border-bottom:1px solid #dedede;height:13.30px"><div class="cell" style="left:0;width:18.5px;text-align:center;background:#ececec;border-right:1px solid #cfcfcf;font-size:8.2px;color:#555;height:13.3px;line-height:13px">13</div><div class="cell num" style="left:18.5px;width:72.2px">491</div><div class="cell num" style="left:92.5px;width:57.2px">2015-01-04</div><div class="cell num" style="left:151.5px;width:54.2px">78539</div><div class="cell num" style="left:207.5px;width:60.2px">1</div><div class="cell num" style="left:269.5px;width:66.2px">892.4475</div><div class="cell" style="left:340.5px;width:85px">Texas/Edinburg</div><div class="cell" style="left:428.5px;width:62px">Central</div><div class="cell" style="left:493.5px;width:69px">District #23</div><div class="cell" style="left:565.5px;width:65px">USA</div><div class="cell" style="left:633.5px;width:81px">VanArsdel</div><div class="cell" style="left:717.5px;width:29px">Y</div></div><div class="row" style="left:0;top:172.90px;border-bottom:1px solid #dedede;height:13.30px"><div class="cell" style="left:0;width:18.5px;text-align:center;background:#ececec;border-right:1px solid #cfcfcf;font-size:8.2px;color:#555;height:13.3px;line-height:13px">14</div><div class="cell num" style="left:18.5px;width:72.2px">512</div><div class="cell num" style="left:92.5px;width:57.2px">2015-01-04</div><div class="cell num" style="left:151.5px;width:54.2px">78664</div><div class="cell num" style="left:207.5px;width:60.2px">1</div><div class="cell num" style="left:269.5px;width:66.2px">246.4875</div><div class="cell" style="left:340.5px;width:85px">Texas/Round Rock</div><div class="cell" style="left:428.5px;width:62px">Central</div><div class="cell" style="left:493.5px;width:69px">District #23</div><div class="cell" style="left:565.5px;width:65px">USA</div><div class="cell" style="left:633.5px;width:81px">VanArsdel</div><div class="cell" style="left:717.5px;width:29px">N</div></div><div class="row" style="left:0;top:186.20px;border-bottom:1px solid #dedede;height:13.30px"><div class="cell" style="left:0;width:18.5px;text-align:center;background:#ececec;border-right:1px solid #cfcfcf;font-size:8.2px;color:#555;height:13.3px;line-height:13px">15</div><div class="cell num" style="left:18.5px;width:72.2px">1182</div><div class="cell num" style="left:92.5px;width:57.2px">2015-01-04</div><div class="cell num" style="left:151.5px;width:54.2px">78516</div><div class="cell num" style="left:207.5px;width:60.2px">1</div><div class="cell num" style="left:269.5px;width:66.2px">215.1975</div><div class="cell" style="left:340.5px;width:85px">Texas/Alamo</div><div class="cell" style="left:428.5px;width:62px">Central</div><div class="cell" style="left:493.5px;width:69px">District #23</div><div class="cell" style="left:565.5px;width:65px">USA</div><div class="cell" style="left:633.5px;width:81px">Pirum</div><div class="cell" style="left:717.5px;width:29px">N</div></div><div class="row" style="left:0;top:199.50px;border-bottom:1px solid #dedede;height:13.30px"><div class="cell" style="left:0;width:18.5px;text-align:center;background:#ececec;border-right:1px solid #cfcfcf;font-size:8.2px;color:#555;height:13.3px;line-height:13px">16</div><div class="cell num" style="left:18.5px;width:72.2px">1182</div><div class="cell num" style="left:92.5px;width:57.2px">2015-01-04</div><div class="cell num" style="left:151.5px;width:54.2px">77082</div><div class="cell num" style="left:207.5px;width:60.2px">1</div><div class="cell num" style="left:269.5px;width:66.2px">209.9475</div><div class="cell" style="left:340.5px;width:85px">Texas/Houston</div><div class="cell" style="left:428.5px;width:62px">Central</div><div class="cell" style="left:493.5px;width:69px">District #23</div><div class="cell" style="left:565.5px;width:65px">USA</div><div class="cell" style="left:633.5px;width:81px">Pirum</div><div class="cell" style="left:717.5px;width:29px">N</div></div><div class="row" style="left:0;top:212.80px;border-bottom:1px solid #dedede;height:13.30px"><div class="cell" style="left:0;width:18.5px;text-align:center;background:#ececec;border-right:1px solid #cfcfcf;font-size:8.2px;color:#555;height:13.3px;line-height:13px">17</div><div class="cell num" style="left:18.5px;width:72.2px">1053</div><div class="cell num" style="left:92.5px;width:57.2px">2015-01-04</div><div class="cell num" style="left:151.5px;width:54.2px">12946</div><div class="cell num" style="left:207.5px;width:60.2px">1</div><div class="cell num" style="left:269.5px;width:66.2px">293.9475</div><div class="cell" style="left:340.5px;width:85px">NY/Lake Placid</div><div class="cell" style="left:428.5px;width:62px">East</div><div class="cell" style="left:493.5px;width:69px">District #01</div><div class="cell" style="left:565.5px;width:65px">USA</div><div class="cell" style="left:633.5px;width:81px">Pirum</div><div class="cell" style="left:717.5px;width:29px">N</div></div><div class="row" style="left:0;top:226.10px;border-bottom:1px solid #dedede;height:13.30px"><div class="cell" style="left:0;width:18.5px;text-align:center;background:#ececec;border-right:1px solid #cfcfcf;font-size:8.2px;color:#555;height:13.3px;line-height:13px">18</div><div class="cell num" style="left:18.5px;width:72.2px">1053</div><div class="cell num" style="left:92.5px;width:57.2px">2015-01-04</div><div class="cell num" style="left:151.5px;width:54.2px">77962</div><div class="cell num" style="left:207.5px;width:60.2px">1</div><div class="cell num" style="left:269.5px;width:66.2px">293.9475</div><div class="cell" style="left:340.5px;width:85px">Texas/Ganado</div><div class="cell" style="left:428.5px;width:62px">Central</div><div class="cell" style="left:493.5px;width:69px">District #23</div><div class="cell" style="left:565.5px;width:65px">USA</div><div class="cell" style="left:633.5px;width:81px">Pirum</div><div class="cell" style="left:717.5px;width:29px">N</div></div><div class="row" style="left:0;top:239.40px;border-bottom:1px solid #dedede;height:13.30px"><div class="cell" style="left:0;width:18.5px;text-align:center;background:#ececec;border-right:1px solid #cfcfcf;font-size:8.2px;color:#555;height:13.3px;line-height:13px">19</div><div class="cell num" style="left:18.5px;width:72.2px">1120</div><div class="cell num" style="left:92.5px;width:57.2px">2015-01-04</div><div class="cell num" style="left:151.5px;width:54.2px">14505</div><div class="cell num" style="left:207.5px;width:60.2px">1</div><div class="cell num" style="left:269.5px;width:66.2px">183.6975</div><div class="cell" style="left:340.5px;width:85px">NY/Marion</div><div class="cell" style="left:428.5px;width:62px">East</div><div class="cell" style="left:493.5px;width:69px">District #06</div><div class="cell" style="left:565.5px;width:65px">USA</div><div class="cell" style="left:633.5px;width:81px">Pirum</div><div class="cell" style="left:717.5px;width:29px">N</div></div><div class="row" style="left:0;top:252.70px;border-bottom:1px solid #dedede;height:13.30px"><div class="cell" style="left:0;width:18.5px;text-align:center;background:#ececec;border-right:1px solid #cfcfcf;font-size:8.2px;color:#555;height:13.3px;line-height:13px">20</div><div class="cell num" style="left:18.5px;width:72.2px">676</div><div class="cell num" style="left:92.5px;width:57.2px">2015-01-05</div><div class="cell num" style="left:151.5px;width:54.2px">75020</div><div class="cell num" style="left:207.5px;width:60.2px">1</div><div class="cell num" style="left:269.5px;width:66.2px">761.1975</div><div class="cell" style="left:340.5px;width:85px">Texas/Denison</div><div class="cell" style="left:428.5px;width:62px">Central</div><div class="cell" style="left:493.5px;width:69px">District #22</div><div class="cell" style="left:565.5px;width:65px">USA</div><div class="cell" style="left:633.5px;width:81px">VanArsdel</div><div class="cell" style="left:717.5px;width:29px">N</div></div><div class="row" style="left:0;top:266.00px;border-bottom:1px solid #dedede;height:13.30px"><div class="cell" style="left:0;width:18.5px;text-align:center;background:#ececec;border-right:1px solid #cfcfcf;font-size:8.2px;color:#555;height:13.3px;line-height:13px">21</div><div class="cell num" style="left:18.5px;width:72.2px">400</div><div class="cell num" style="left:92.5px;width:57.2px">2015-01-05</div><div class="cell num" style="left:151.5px;width:54.2px">77318</div><div class="cell num" style="left:207.5px;width:60.2px">1</div><div class="cell num" style="left:269.5px;width:66.2px">892.4475</div><div class="cell" style="left:340.5px;width:85px">Texas/Willis</div><div class="cell" style="left:428.5px;width:62px">Central</div><div class="cell" style="left:493.5px;width:69px">District #23</div><div class="cell" style="left:565.5px;width:65px">USA</div><div class="cell" style="left:633.5px;width:81px">VanArsdel</div><div class="cell" style="left:717.5px;width:29px">Y</div></div><div class="row" style="left:0;top:279.30px;border-bottom:1px solid #dedede;height:13.30px"><div class="cell" style="left:0;width:18.5px;text-align:center;background:#ececec;border-right:1px solid #cfcfcf;font-size:8.2px;color:#555;height:13.3px;line-height:13px">22</div><div class="cell num" style="left:18.5px;width:72.2px">491</div><div class="cell num" style="left:92.5px;width:57.2px">2015-01-05</div><div class="cell num" style="left:151.5px;width:54.2px">75662</div><div class="cell num" style="left:207.5px;width:60.2px">1</div><div class="cell num" style="left:269.5px;width:66.2px">892.4475</div><div class="cell" style="left:340.5px;width:85px">Texas/Kilgore</div><div class="cell" style="left:428.5px;width:62px">Central</div><div class="cell" style="left:493.5px;width:69px">District #24</div><div class="cell" style="left:565.5px;width:65px">USA</div><div class="cell" style="left:633.5px;width:81px">VanArsdel</div><div class="cell" style="left:717.5px;width:29px">Y</div></div><div class="row" style="left:0;top:292.60px;border-bottom:1px solid #dedede;height:13.30px"><div class="cell" style="left:0;width:18.5px;text-align:center;background:#ececec;border-right:1px solid #cfcfcf;font-size:8.2px;color:#555;height:13.3px;line-height:13px">23</div><div class="cell num" style="left:18.5px;width:72.2px">1182</div><div class="cell num" style="left:92.5px;width:57.2px">2015-01-05</div><div class="cell num" style="left:151.5px;width:54.2px">77043</div><div class="cell num" style="left:207.5px;width:60.2px">1</div><div class="cell num" style="left:269.5px;width:66.2px">215.1975</div><div class="cell" style="left:340.5px;width:85px">Texas/Houston</div><div class="cell" style="left:428.5px;width:62px">Central</div><div class="cell" style="left:493.5px;width:69px">District #23</div><div class="cell" style="left:565.5px;width:65px">USA</div><div class="cell" style="left:633.5px;width:81px">Pirum</div><div class="cell" style="left:717.5px;width:29px">N</div></div><div class="row" style="left:0;top:305.90px;border-bottom:1px solid #dedede;height:13.30px"><div class="cell" style="left:0;width:18.5px;text-align:center;background:#ececec;border-right:1px solid #cfcfcf;font-size:8.2px;color:#555;height:13.3px;line-height:13px">24</div><div class="cell num" style="left:18.5px;width:72.2px">1182</div><div class="cell num" style="left:92.5px;width:57.2px">2015-01-05</div><div class="cell num" style="left:151.5px;width:54.2px">77449</div><div class="cell num" style="left:207.5px;width:60.2px">1</div><div class="cell num" style="left:269.5px;width:66.2px">225.6975</div><div class="cell" style="left:340.5px;width:85px">Texas/Katy</div><div class="cell" style="left:428.5px;width:62px">Central</div><div class="cell" style="left:493.5px;width:69px">District #23</div><div class="cell" style="left:565.5px;width:65px">USA</div><div class="cell" style="left:633.5px;width:81px">Pirum</div><div class="cell" style="left:717.5px;width:29px">N</div></div><div class="row" style="left:0;top:319.20px;border-bottom:1px solid #dedede;height:13.30px"><div class="cell" style="left:0;width:18.5px;text-align:center;background:#ececec;border-right:1px solid #cfcfcf;font-size:8.2px;color:#555;height:13.3px;line-height:13px">25</div><div class="cell num" style="left:18.5px;width:72.2px">2045</div><div class="cell num" style="left:92.5px;width:57.2px">2015-01-05</div><div class="cell num" style="left:151.5px;width:54.2px">78258</div><div class="cell num" style="left:207.5px;width:60.2px">1</div><div class="cell num" style="left:269.5px;width:66.2px">514.4475</div><div class="cell" style="left:340.5px;width:85px">Texas/San Antonio</div><div class="cell" style="left:428.5px;width:62px">Central</div><div class="cell" style="left:493.5px;width:69px">District #23</div><div class="cell" style="left:565.5px;width:65px">USA</div><div class="cell" style="left:633.5px;width:81px">Currus</div><div class="cell" style="left:717.5px;width:29px">N</div></div><div class="row" style="left:0;top:332.50px;border-bottom:1px solid #dedede;height:13.30px"><div class="cell" style="left:0;width:18.5px;text-align:center;background:#ececec;border-right:1px solid #cfcfcf;font-size:8.2px;color:#555;height:13.3px;line-height:13px">26</div><div class="cell num" style="left:18.5px;width:72.2px">2254</div><div class="cell num" style="left:92.5px;width:57.2px">2015-01-05</div><div class="cell num" style="left:151.5px;width:54.2px">13152</div><div class="cell num" style="left:207.5px;width:60.2px">1</div><div class="cell num" style="left:269.5px;width:66.2px">60.3225</div><div class="cell" style="left:340.5px;width:85px">NY/Skaneateles</div><div class="cell" style="left:428.5px;width:62px">East</div><div class="cell" style="left:493.5px;width:69px">District #01</div><div class="cell" style="left:565.5px;width:65px">USA</div><div class="cell" style="left:633.5px;width:81px">Aliqui</div><div class="cell" style="left:717.5px;width:29px">N</div></div><div class="row" style="left:0;top:345.80px;border-bottom:1px solid #dedede;height:13.30px"><div class="cell" style="left:0;width:18.5px;text-align:center;background:#ececec;border-right:1px solid #cfcfcf;font-size:8.2px;color:#555;height:13.3px;line-height:13px">27</div><div class="cell num" style="left:18.5px;width:72.2px">2255</div><div class="cell num" style="left:92.5px;width:57.2px">2015-01-05</div><div class="cell num" style="left:151.5px;width:54.2px">13152</div><div class="cell num" style="left:207.5px;width:60.2px">1</div><div class="cell num" style="left:269.5px;width:66.2px">60.3225</div><div class="cell" style="left:340.5px;width:85px">NY/Skaneateles</div><div class="cell" style="left:428.5px;width:62px">East</div><div class="cell" style="left:493.5px;width:69px">District #01</div><div class="cell" style="left:565.5px;width:65px">USA</div><div class="cell" style="left:633.5px;width:81px">Aliqui</div><div class="cell" style="left:717.5px;width:29px">N</div></div><div class="row" style="left:0;top:359.10px;border-bottom:1px solid #dedede;height:13.30px"><div class="cell" style="left:0;width:18.5px;text-align:center;background:#ececec;border-right:1px solid #cfcfcf;font-size:8.2px;color:#555;height:13.3px;line-height:13px">28</div><div class="cell num" style="left:18.5px;width:72.2px">1053</div><div class="cell num" style="left:92.5px;width:57.2px">2015-01-05</div><div class="cell num" style="left:151.5px;width:54.2px">78543</div><div class="cell num" style="left:207.5px;width:60.2px">1</div><div class="cell num" style="left:269.5px;width:66.2px">293.9475</div><div class="cell" style="left:340.5px;width:85px">Texas/Elsa</div><div class="cell" style="left:428.5px;width:62px">Central</div><div class="cell" style="left:493.5px;width:69px">District #23</div><div class="cell" style="left:565.5px;width:65px">USA</div><div class="cell" style="left:633.5px;width:81px">Pirum</div><div class="cell" style="left:717.5px;width:29px">N</div></div><div class="row" style="left:0;top:372.40px;border-bottom:1px solid #dedede;height:13.30px"><div class="cell" style="left:0;width:18.5px;text-align:center;background:#ececec;border-right:1px solid #cfcfcf;font-size:8.2px;color:#555;height:13.3px;line-height:13px">29</div><div class="cell num" style="left:18.5px;width:72.2px">2091</div><div class="cell num" style="left:92.5px;width:57.2px">2015-01-05</div><div class="cell num" style="left:151.5px;width:54.2px">13905</div><div class="cell num" style="left:207.5px;width:60.2px">2</div><div class="cell num" style="left:269.5px;width:66.2px">367.395</div><div class="cell" style="left:340.5px;width:85px">NY/Binghamton</div><div class="cell" style="left:428.5px;width:62px">East</div><div class="cell" style="left:493.5px;width:69px">District #01</div><div class="cell" style="left:565.5px;width:65px">USA</div><div class="cell" style="left:633.5px;width:81px">Currus</div><div class="cell" style="left:717.5px;width:29px">N</div></div><div class="row" style="left:0;top:385.70px;border-bottom:1px solid #dedede;height:13.30px"><div class="cell" style="left:0;width:18.5px;text-align:center;background:#ececec;border-right:1px solid #cfcfcf;font-size:8.2px;color:#555;height:13.3px;line-height:13px">30</div><div class="cell num" style="left:18.5px;width:72.2px">580</div><div class="cell num" style="left:92.5px;width:57.2px">2015-01-06</div><div class="cell num" style="left:151.5px;width:54.2px">76544</div><div class="cell num" style="left:207.5px;width:60.2px">1</div><div class="cell num" style="left:269.5px;width:66.2px">834.4875</div><div class="cell" style="left:340.5px;width:85px">Texas/Fort Hood</div><div class="cell" style="left:428.5px;width:62px">Central</div><div class="cell" style="left:493.5px;width:69px">District #23</div><div class="cell" style="left:565.5px;width:65px">USA</div><div class="cell" style="left:633.5px;width:81px">VanArsdel</div><div class="cell" style="left:717.5px;width:29px">N</div></div><div class="row" style="left:0;top:399.00px;border-bottom:1px solid #dedede;height:13.30px"><div class="cell" style="left:0;width:18.5px;text-align:center;background:#ececec;border-right:1px solid #cfcfcf;font-size:8.2px;color:#555;height:13.3px;line-height:13px">31</div><div class="cell num" style="left:18.5px;width:72.2px">609</div><div class="cell num" style="left:92.5px;width:57.2px">2015-01-06</div><div class="cell num" style="left:151.5px;width:54.2px">77380</div><div class="cell num" style="left:207.5px;width:60.2px">1</div><div class="cell num" style="left:269.5px;width:66.2px">839.9475</div><div class="cell" style="left:340.5px;width:85px">Texas/Spring</div><div class="cell" style="left:428.5px;width:62px">Central</div><div class="cell" style="left:493.5px;width:69px">District #23</div><div class="cell" style="left:565.5px;width:65px">USA</div><div class="cell" style="left:633.5px;width:81px">VanArsdel</div><div class="cell" style="left:717.5px;width:29px">N</div></div><div class="row" style="left:0;top:412.30px;border-bottom:1px solid #dedede;height:13.30px"><div class="cell" style="left:0;width:18.5px;text-align:center;background:#ececec;border-right:1px solid #cfcfcf;font-size:8.2px;color:#555;height:13.3px;line-height:13px">32</div><div class="cell num" style="left:18.5px;width:72.2px">676</div><div class="cell num" style="left:92.5px;width:57.2px">2015-01-06</div><div class="cell num" style="left:151.5px;width:54.2px">77380</div><div class="cell num" style="left:207.5px;width:60.2px">1</div><div class="cell num" style="left:269.5px;width:66.2px">761.1975</div><div class="cell" style="left:340.5px;width:85px">Texas/Spring</div><div class="cell" style="left:428.5px;width:62px">Central</div><div class="cell" style="left:493.5px;width:69px">District #23</div><div class="cell" style="left:565.5px;width:65px">USA</div><div class="cell" style="left:633.5px;width:81px">VanArsdel</div><div class="cell" style="left:717.5px;width:29px">N</div></div><div class="row" style="left:0;top:425.60px;border-bottom:1px solid #dedede;height:13.30px"><div class="cell" style="left:0;width:18.5px;text-align:center;background:#ececec;border-right:1px solid #cfcfcf;font-size:8.2px;color:#555;height:13.3px;line-height:13px">33</div><div class="cell num" style="left:18.5px;width:72.2px">604</div><div class="cell num" style="left:92.5px;width:57.2px">2015-01-06</div><div class="cell num" style="left:151.5px;width:54.2px">75063</div><div class="cell num" style="left:207.5px;width:60.2px">1</div><div class="cell num" style="left:269.5px;width:66.2px">524.9475</div><div class="cell" style="left:340.5px;width:85px">Texas/Irving</div><div class="cell" style="left:428.5px;width:62px">Central</div><div class="cell" style="left:493.5px;width:69px">District #22</div><div class="cell" style="left:565.5px;width:65px">USA</div><div class="cell" style="left:633.5px;width:81px">VanArsdel</div><div class="cell" style="left:717.5px;width:29px">N</div></div><div class="row" style="left:0;top:438.90px;border-bottom:1px solid #dedede;height:13.30px"><div class="cell" style="left:0;width:18.5px;text-align:center;background:#ececec;border-right:1px solid #cfcfcf;font-size:8.2px;color:#555;height:13.3px;line-height:13px">34</div><div class="cell num" style="left:18.5px;width:72.2px">559</div><div class="cell num" style="left:92.5px;width:57.2px">2015-01-06</div><div class="cell num" style="left:151.5px;width:54.2px">79007</div><div class="cell num" style="left:207.5px;width:60.2px">1</div><div class="cell num" style="left:269.5px;width:66.2px">629.9475</div><div class="cell" style="left:340.5px;width:85px">Texas/Borger</div><div class="cell" style="left:428.5px;width:62px">Central</div><div class="cell" style="left:493.5px;width:69px">District #21</div><div class="cell" style="left:565.5px;width:65px">USA</div><div class="cell" style="left:633.5px;width:81px">VanArsdel</div><div class="cell" style="left:717.5px;width:29px">N</div></div><div class="row" style="left:0;top:452.20px;border-bottom:1px solid #dedede;height:13.30px"><div class="cell" style="left:0;width:18.5px;text-align:center;background:#ececec;border-right:1px solid #cfcfcf;font-size:8.2px;color:#555;height:13.3px;line-height:13px">35</div><div class="cell num" style="left:18.5px;width:72.2px">559</div><div class="cell num" style="left:92.5px;width:57.2px">2015-01-06</div><div class="cell num" style="left:151.5px;width:54.2px">14903</div><div class="cell num" style="left:207.5px;width:60.2px">1</div><div class="cell num" style="left:269.5px;width:66.2px">629.9475</div><div class="cell" style="left:340.5px;width:85px">NY/Elmira</div><div class="cell" style="left:428.5px;width:62px">East</div><div class="cell" style="left:493.5px;width:69px">District #06</div><div class="cell" style="left:565.5px;width:65px">USA</div><div class="cell" style="left:633.5px;width:81px">VanArsdel</div><div class="cell" style="left:717.5px;width:29px">N</div></div><div class="row" style="left:0;top:465.50px;border-bottom:1px solid #dedede;height:13.30px"><div class="cell" style="left:0;width:18.5px;text-align:center;background:#ececec;border-right:1px solid #cfcfcf;font-size:8.2px;color:#555;height:13.3px;line-height:13px">36</div><div class="cell num" style="left:18.5px;width:72.2px">443</div><div class="cell num" style="left:92.5px;width:57.2px">2015-01-06</div><div class="cell num" style="left:151.5px;width:54.2px">77016</div><div class="cell num" style="left:207.5px;width:60.2px">1</div><div class="cell num" style="left:269.5px;width:66.2px">923.7375</div><div class="cell" style="left:340.5px;width:85px">Texas/Houston</div><div class="cell" style="left:428.5px;width:62px">Central</div><div class="cell" style="left:493.5px;width:69px">District #23</div><div class="cell" style="left:565.5px;width:65px">USA</div><div class="cell" style="left:633.5px;width:81px">VanArsdel</div><div class="cell" style="left:717.5px;width:29px">Y</div></div><div class="row" style="left:0;top:478.80px;border-bottom:1px solid #dedede;height:13.30px"><div class="cell" style="left:0;width:18.5px;text-align:center;background:#ececec;border-right:1px solid #cfcfcf;font-size:8.2px;color:#555;height:13.3px;line-height:13px">37</div></div><div class="a" style="left:18.5px;top:0;width:1px;height:474px;background:#d9d9d9"></div><div class="a" style="left:92.5px;top:0;width:1px;height:474px;background:#d9d9d9"></div><div class="a" style="left:151.5px;top:0;width:1px;height:474px;background:#d9d9d9"></div><div class="a" style="left:207.5px;top:0;width:1px;height:474px;background:#d9d9d9"></div><div class="a" style="left:269.5px;top:0;width:1px;height:474px;background:#d9d9d9"></div><div class="a" style="left:337.5px;top:0;width:1px;height:474px;background:#d9d9d9"></div><div class="a" style="left:425.5px;top:0;width:1px;height:474px;background:#d9d9d9"></div><div class="a" style="left:490.5px;top:0;width:1px;height:474px;background:#d9d9d9"></div><div class="a" style="left:562.5px;top:0;width:1px;height:474px;background:#d9d9d9"></div><div class="a" style="left:630.5px;top:0;width:1px;height:474px;background:#d9d9d9"></div><div class="a" style="left:714.5px;top:0;width:1px;height:474px;background:#d9d9d9"></div></div><div class="a" style="left:909px;top:396.5px;width:11px;height:473.5px;background:#f0f0f0;"></div><svg class="a" style="left:909.5px;top:406px" width="10" height="8" viewBox="0 0 10 8"><path d="M1.5 6L5 2.2L8.5 6" fill="none" stroke="#444" stroke-width="1.3"/></svg><svg class="a" style="left:909.5px;top:852px" width="10" height="8" viewBox="0 0 10 8"><path d="M1.5 2L5 5.8L8.5 2" fill="none" stroke="#444" stroke-width="1.3"/></svg><div class="a" style="left:909.5px;top:417px;width:10px;height:308px;background:#c9c9c9;"></div><div class="a" style="left:192px;top:870px;width:728px;height:11px;background:#f0f0f0;"></div><svg class="a" style="left:202px;top:871px" width="8" height="10" viewBox="0 0 8 10"><path d="M6 1.5L2.2 5L6 8.5" fill="none" stroke="#444" stroke-width="1.3"/></svg><svg class="a" style="left:890px;top:871px" width="8" height="10" viewBox="0 0 8 10"><path d="M2 1.5L5.8 5L2 8.5" fill="none" stroke="#444" stroke-width="1.3"/></svg><div class="a" style="left:214px;top:870.5px;width:492px;height:10px;background:#c9c9c9;"></div><div class="a" style="left:173.5px;top:870px;width:18.5px;height:11px;background:#ececec;border-right:1px solid #cfcfcf;overflow:hidden"></div><div class="s" style="left:173.5px;top:874.9px;font-size:8.2px;color:#555;width:18px;text-align:center;">37</div><div class="a" style="left:173.5px;top:880.5px;width:19px;height:1px;background:#e4e4e4;"></div><div class="a" style="left:145px;top:881px;width:945px;height:13px;background:#f3f1ef;border-top:1px solid #dcdcdc"></div><div class="s" style="left:149px;top:884.8px;font-size:7.4px;color:#444;">14개 열, 999+개 행</div><div class="s" style="left:886px;top:884.8px;font-size:7.4px;color:#444;width:200px;text-align:right;">오후 2:28에 미리 보기가 다운로드됨</div><div class="a" style="left:923px;top:355px;width:1px;height:526px;background:#f4f4f4;"></div><div class="s" style="left:932px;top:367.5px;font-size:13px;color:#4a8a6c;letter-spacing:.4px">쿼리 설정</div><svg class="a" style="left:1065px;top:371px" width="9" height="9" viewBox="0 0 9 9"><path d="M1 1L8 8M8 1L1 8" stroke="#666" stroke-width=".9"/></svg><svg class="a" style="left:929px;top:396px" width="5" height="5" viewBox="0 0 5 5"><path d="M4.5 .5V4.5H.5Z" fill="#444"/></svg><div class="s" style="left:937px;top:395.2px;font-size:7.6px;color:#2f7d55;font-weight:bold">속성</div><div class="s" style="left:937px;top:407.2px;font-size:7.6px;color:#444;">이름</div><div class="a" style="left:937px;top:418px;width:138px;height:12.5px;background:#fff;border:1px solid #b9b9b9"></div><div class="s" style="left:940px;top:421.2px;font-size:7.6px;color:#444;">표1</div><div class="s" style="left:937px;top:437.2px;font-size:7.6px;color:#2b6fc2;">모든 속성</div><svg class="a" style="left:929px;top:460px" width="5" height="5" viewBox="0 0 5 5"><path d="M4.5 .5V4.5H.5Z" fill="#444"/></svg><div class="s" style="left:937px;top:459.2px;font-size:7.6px;color:#2f7d55;font-weight:bold">적용된 단계</div><div class="a" style="left:937px;top:471px;width:138px;height:396.5px;background:#fff;border:1px solid #c4c4c4"></div><div class="s" style="left:950px;top:474.65px;font-size:8.1px;color:#555;">원본</div><div class="s" style="left:950px;top:487.28px;font-size:8.1px;color:#555;">변경된 유형</div><div class="s" style="left:950px;top:499.91px;font-size:8.1px;color:#555;">구분 기호에 따라 열 분할</div><svg class="a" style="left:1062px;top:499.96px" width="7" height="7" viewBox="0 0 7 7"><circle cx="3.5" cy="3.5" r="1.5" fill="none" stroke="#999" stroke-width="1"/><path d="M3.5 .3V1.6M3.5 5.4V6.7M.3 3.5H1.6M5.4 3.5H6.7M1.2 1.2L2.1 2.1M4.9 4.9L5.8 5.8M5.8 1.2L4.9 2.1M2.1 4.9L1.2 5.8" stroke="#999" stroke-width=".8"/></svg><div class="s" style="left:950px;top:512.54px;font-size:8.1px;color:#555;">변경된 유형1</div><div class="s" style="left:950px;top:525.17px;font-size:8.1px;color:#555;">다시 정렬한 열 수</div><div class="s" style="left:950px;top:537.8px;font-size:8.1px;color:#555;">병합된 열 수</div><svg class="a" style="left:1062px;top:537.85px" width="7" height="7" viewBox="0 0 7 7"><circle cx="3.5" cy="3.5" r="1.5" fill="none" stroke="#999" stroke-width="1"/><path d="M3.5 .3V1.6M3.5 5.4V6.7M.3 3.5H1.6M5.4 3.5H6.7M1.2 1.2L2.1 2.1M4.9 4.9L5.8 5.8M5.8 1.2L4.9 2.1M2.1 4.9L1.2 5.8" stroke="#999" stroke-width=".8"/></svg><div class="s" style="left:950px;top:550.43px;font-size:8.1px;color:#555;">제거된 열 수</div><div class="s" style="left:950px;top:563.06px;font-size:8.1px;color:#555;">이름을 바꾼 열 수</div><div class="a" style="left:938px;top:573.24px;width:136px;height:12px;background:#cdebd9;"></div><svg class="a" style="left:940px;top:575.74px" width="8" height="8" viewBox="0 0 8 8"><path d="M1 1L6.5 6.5M6.5 1L1 6.5" stroke="#444" stroke-width=".9"/></svg><div class="s" style="left:950px;top:575.69px;font-size:8.1px;color:#333;">바꾼 값</div><svg class="a" style="left:1062px;top:575.74px" width="7" height="7" viewBox="0 0 7 7"><circle cx="3.5" cy="3.5" r="1.5" fill="none" stroke="#999" stroke-width="1"/><path d="M3.5 .3V1.6M3.5 5.4V6.7M.3 3.5H1.6M5.4 3.5H6.7M1.2 1.2L2.1 2.1M4.9 4.9L5.8 5.8M5.8 1.2L4.9 2.1M2.1 4.9L1.2 5.8" stroke="#999" stroke-width=".8"/></svg><div class="s" style="left:950px;top:588.32px;font-size:8.1px;color:#555;">조건 열이 추가됨</div><svg class="a" style="left:1062px;top:588.37px" width="7" height="7" viewBox="0 0 7 7"><circle cx="3.5" cy="3.5" r="1.5" fill="none" stroke="#999" stroke-width="1"/><path d="M3.5 .3V1.6M3.5 5.4V6.7M.3 3.5H1.6M5.4 3.5H6.7M1.2 1.2L2.1 2.1M4.9 4.9L5.8 5.8M5.8 1.2L4.9 2.1M2.1 4.9L1.2 5.8" stroke="#999" stroke-width=".8"/></svg><div class="s" style="left:950px;top:600.95px;font-size:8.1px;color:#555;">추가된 사용자 지정 항목</div><svg class="a" style="left:1062px;top:601px" width="7" height="7" viewBox="0 0 7 7"><circle cx="3.5" cy="3.5" r="1.5" fill="none" stroke="#999" stroke-width="1"/><path d="M3.5 .3V1.6M3.5 5.4V6.7M.3 3.5H1.6M5.4 3.5H6.7M1.2 1.2L2.1 2.1M4.9 4.9L5.8 5.8M5.8 1.2L4.9 2.1M2.1 4.9L1.2 5.8" stroke="#999" stroke-width=".8"/></svg><div class="s" style="left:950px;top:613.58px;font-size:8.1px;color:#555;">변경된 유형2</div><div class="a" style="left:1155px;top:0;width:8px;height:38px;background:linear-gradient(90deg,rgba(255,255,255,0),rgba(0,0,0,.12))"></div><div class="a" style="left:1163px;top:3px;width:351px;height:1025px;background:#fff;border-left:1px solid #9a9a9a;border-top:1px solid #9a9a9a"></div><div class="zi" style="left:1174px;top:12px"></div><svg class="a" style="left:1174px;top:12px" width="18" height="18" viewBox="0 0 18 18"><rect x="3.2" y="5.6" width="7.8" height="6.8" rx="1.8" fill="#fff"/><path d="M11.6 8.1 L14.6 6 V12 L11.6 9.9Z" fill="#fff"/></svg><div class="t" style="left:1199px;top:13.5px;font-size:15.4px;color:#8a8a8a">참가자(65)</div><div class="a" style="left:1361px;top:20px;width:12px;height:1px;background:#888"></div><div class="a" style="left:1419px;top:15px;width:12px;height:12px;border:1px solid #888"></div><svg class="a" style="left:1478px;top:15px" width="13" height="13"><path d="M0.5 0.5L12.5 12.5M12.5 0.5L0.5 12.5" stroke="#777" stroke-width="1"/></svg><div class="a" style="left:1187px;top:53px;width:306px;height:40px;border:1px solid #b3b3cb;border-radius:9px;background:#fff"></div><svg class="a" style="left:1200px;top:64px" width="18" height="18"><circle cx="8" cy="8" r="6" fill="none" stroke="#5c5c6e" stroke-width="1.5"/><path d="M12.3 12.3L16.5 16.5" stroke="#5c5c6e" stroke-width="1.5"/></svg><div class="t" style="left:1222px;top:64.5px;font-size:17px;color:#7f7f90;font-weight:300">참가자 찾기</div><div class="av" style="top:102px;background:#8e44ad">M</div><div class="a" style="left:1182px;top:160px;width:43px;text-align:center;font-weight:bold;line-height:1"><div style="font-size:10.4px;color:#c00;letter-spacing:-.2px">MASO</div><div style="font-size:7.3px;color:#111;margin-top:.6px;letter-spacing:-.2px">CAMPUS</div><div style="font-size:3.5px;color:#555;margin-top:1.2px;font-weight:normal">Actionable Content</div></div><div class="av k" style="top:204px;background:#d35400">강</div><div class="av" style="top:255px;background:#c0392b">M</div><div class="av k" style="top:306px;background:#d35400">마</div><div class="av" style="top:357px;background:#34495e">M</div><div class="av k" style="top:459px;background:#16a085">강</div><div class="av k" style="top:510px;background:#27ae60">강</div><div class="av k" style="top:561px;background:#34495e">곽</div><div class="av k" style="top:612px;background:#34495e">구</div><div class="av k" style="top:663px;background:#f39c12">권</div><div class="av k" style="top:714px;background:#27ae60">권</div><div class="av k" style="top:765px;background:#16a085">김</div><div class="av k" style="top:816px;background:#f39c12">김</div><div class="av k" style="top:867px;background:#8e44ad">김</div><div class="av k" style="top:918px;background:#16a085">김</div><div class="av k" style="top:969px;background:#34495e">김</div><div class="av k" style="top:1020px;background:#f39c12">김</div><div class="a" style="left:1501px;top:96px;width:10px;height:930px;background:#f2f2f7;border-radius:5px"></div><div class="a" style="left:1501px;top:96px;width:10px;height:280px;background:#aeaeb8;border-radius:5px"></div><div class="a" style="left:1514px;top:3px;width:2px;height:384px;background:#6f7278"></div><div class="a" style="left:1514px;top:387px;width:2px;height:566px;background:#6a5a56"></div><div class="a" style="left:1514px;top:953px;width:2px;height:75px;background:#1c1a1a"></div><div class="a" style="left:1516px;top:4px;width:402px;height:1024px;background:#fff"></div><div class="a" style="left:1516px;top:4px;width:14px;height:1024px;background:linear-gradient(90deg,rgba(0,0,0,.22),rgba(0,0,0,.05) 40%,rgba(0,0,0,0))"></div><div class="zi" style="left:1526px;top:13px"></div><svg class="a" style="left:1526px;top:13px" width="18" height="18" viewBox="0 0 18 18"><rect x="3.2" y="5.6" width="7.8" height="6.8" rx="1.8" fill="#fff"/><path d="M11.6 8.1 L14.6 6 V12 L11.6 9.9Z" fill="#fff"/></svg><div class="t" style="left:1550.5px;top:14.5px;font-size:15.4px;color:#8a8a8a;letter-spacing:1px">채팅</div><div class="a" style="left:1765px;top:21px;width:12px;height:1px;background:#888"></div><div class="a" style="left:1823px;top:16px;width:12px;height:12px;border:1px solid #888"></div><svg class="a" style="left:1881px;top:16px" width="13" height="13"><path d="M0.5 0.5L12.5 12.5M12.5 0.5L0.5 12.5" stroke="#777" stroke-width="1"/></svg><div class="bub" style="top:44px;width:273px;height:116px;line-height:33px;padding-top:9px;white-space:normal">아까 추출한 숫자(프로덕트 열<br>에서) 이거는 계속해서 문자로<br>인식하네요<span style="font-size:18px">?</span></div><div class="t" style="left:1539px;top:178px;font-size:16.5px;color:#7d7d8a">발신자<span style="color:#0e72ed">Masocampus</span>수신자<span style="color:#0e72ed">모두</span>:</div><div class="bub" style="top:205px;width:224px">(편집이 끝난 상황 가정)</div><div class="bub" style="top:262px;width:266px;height:83px;line-height:33px;padding-top:9px;white-space:normal">편집기에서 작업한 내용을 엑<br>셀에 반영한다 <span class="l">=</span> 로드한다</div><div class="bub" style="top:352px;width:189px">홈 탭 <span class="l">&gt;</span> 닫기 및 로드</div><div class="bub" style="top:409px;width:149px">글자 부분 클릭</div><div class="bub" style="top:466px;width:172px">닫기 및 로드 클릭</div><div class="bub" style="top:523px;width:177px">삽입 <span class="l">&gt;</span> 피벗테이블</div><div class="bub" style="top:580px;width:145px"><span style="font-size:19px;font-weight:400;color:#3a3a3a">state/city</span> <span class="l">&gt;</span> 행</div><div class="bub" style="top:637px;width:145px">마우스 우클릭</div><div class="bub" style="top:694px;width:65px">편집</div><div class="bub" style="top:751px;width:251px">바꾼 값<span style="font-size:16px">1</span> 선택 <span class="l">&gt;</span> 왼쪽 <span style="font-size:16px">X</span> 선택</div><div class="bub" style="top:808px;width:107px">삭제 선택</div><div class="a" style="left:1905px;top:44px;width:10px;height:828px;background:#f2f2f7;border-radius:5px"></div><div class="a" style="left:1905px;top:857px;width:10px;height:15px;background:#8e8e9a;border-radius:5px"></div><div class="a" style="left:1516px;top:875px;width:402px;height:1px;background:#e4e4ec"></div><div class="t" style="left:1537px;top:897.5px;font-size:15.8px;color:#333;font-weight:350">받는 사람:</div><div class="a" style="left:1614px;top:892px;width:74px;height:29px;background:#f2f2f7;border-radius:8px"></div><div class="t" style="left:1630px;top:897.5px;font-size:15.8px;color:#222;font-weight:350">모두</div><svg class="a" style="left:1668px;top:902px" width="10" height="8"><path d="M1 1.5L5 5.5L9 1.5" fill="none" stroke="#333" stroke-width="1.6"/></svg><svg class="a" style="left:1783px;top:895px" width="17" height="20"><path d="M3.5 1.5H10L15 6.5V16a2 2 0 0 1-2 2H3.5a2 2 0 0 1-2-2V3.5a2 2 0 0 1 2-2ZM10 1.5V6.5H15" fill="none" stroke="#333" stroke-width="1.5" stroke-linejoin="round"/></svg><div class="t" style="left:1812px;top:897px;font-size:16.5px;color:#333;font-weight:350">파일</div><div class="a" style="left:1870px;top:890px;width:29px;height:30px;border:1px solid #dcdce6;border-radius:8px"></div><svg class="a" style="left:1877px;top:903px" width="15" height="4"><circle cx="2.5" cy="2" r="1.1" fill="#555"/><circle cx="7.5" cy="2" r="1.1" fill="#555"/><circle cx="12.5" cy="2" r="1.1" fill="#555"/></svg><div class="t" style="left:1537px;top:932px;font-size:17px;color:#85859a;font-weight:300">여기에 메시지 입력...</div><div class="a" style="left:1918px;top:4px;width:2px;height:356px;background:#6e5a4e"></div><div class="a" style="left:1918px;top:360px;width:2px;height:668px;background:#222"></div><div class="a" style="left:1920px;top:3px;width:4px;height:1025px;background:#f3f3f3"></div><div class="a" style="left:1920px;top:3px;width:4px;height:18px;background:#1e7145"></div><div class="a" style="left:1920px;top:28px;width:4px;height:21px;background:#1a73c8"></div><div class="a" style="left:1920px;top:120px;width:4px;height:908px;background:#e6e6e6"></div></body></html>
